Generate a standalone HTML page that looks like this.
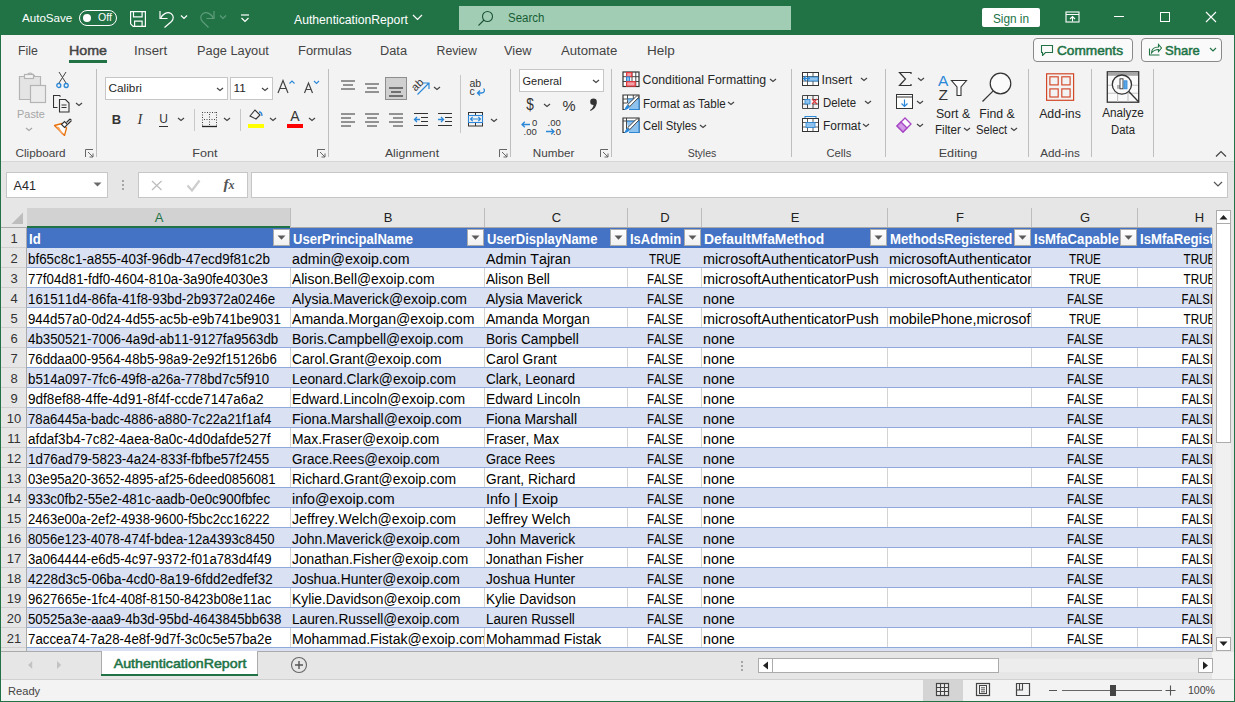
<!DOCTYPE html><html><head><meta charset="utf-8"><style>
html,body{margin:0;padding:0;}
body{width:1235px;height:702px;position:relative;overflow:hidden;background:#F3F3F3;font-family:"Liberation Sans",sans-serif;}
.r{position:absolute;}
.t{position:absolute;white-space:nowrap;}
</style></head><body>
<div class="r" style="left:0px;top:0px;width:1235px;height:35px;background:#217346;"></div>
<div class="t" style="left:22.00px;top:10.98px;font-size:11.6px;line-height:14px;color:#FFFFFF;font-weight:400;">AutoSave</div>
<div class="r" style="left:79px;top:10px;width:36px;height:14px;background:transparent;border:1px solid #fff;border-radius:8px;"></div>
<div class="r" style="left:83px;top:13.5px;width:8px;height:8px;background:#fff;border-radius:50%;"></div>
<div class="t" style="left:98.00px;top:11.36px;font-size:10.5px;line-height:13px;color:#FFFFFF;font-weight:400;">Off</div>
<svg class="r" style="left:129px;top:10px;" width="18" height="18" viewBox="0 0 18 18"><path d="M1.6 1.6h14.8v14.8H4.2L1.6 13.8z" fill="none" stroke="#fff" stroke-width="1.2"/><path d="M4.5 1.6v5.2h8.6V1.6" fill="none" stroke="#fff" stroke-width="1.2"/><path d="M5.6 16.4v-5.2h7.5v5.2" fill="none" stroke="#fff" stroke-width="1.2"/></svg>
<svg class="r" style="left:158px;top:10px;" width="18" height="18" viewBox="0 0 18 18"><path d="M2 1v7.5h7.5" fill="none" stroke="#fff" stroke-width="1.2"/><path d="M2.5 8.5C4.5 3.5 9.5 1.5 13 3.5c3 2 2.8 5.5 0.5 8L6.5 17.5" fill="none" stroke="#fff" stroke-width="1.2"/></svg>
<svg class="r" style="left:180px;top:14px;" width="8" height="6" viewBox="0 0 8 6"><path d="M1 1.5l3 3 3-3" fill="none" stroke="#fff" stroke-width="1.2"/></svg>
<svg class="r" style="left:198px;top:10px;" width="18" height="18" viewBox="0 0 18 18"><path d="M16 1v7.5H8.5" fill="none" stroke="#5E9C7A" stroke-width="1.2"/><path d="M15.5 8.5C13.5 3.5 8.5 1.5 5 3.5c-3 2-2.8 5.5-0.5 8l6 6" fill="none" stroke="#5E9C7A" stroke-width="1.2"/></svg>
<svg class="r" style="left:219px;top:14px;" width="8" height="6" viewBox="0 0 8 6"><path d="M1 1.5l3 3 3-3" fill="none" stroke="#5E9C7A" stroke-width="1.2"/></svg>
<svg class="r" style="left:240px;top:13px;" width="10" height="10" viewBox="0 0 10 10"><path d="M1 2h8" stroke="#fff" stroke-width="1.2"/><path d="M1.5 5l3.5 3.5 3.5-3.5" fill="none" stroke="#fff" stroke-width="1.2"/></svg>
<div class="t" style="left:294.00px;top:12.77px;font-size:12.2px;line-height:15px;color:#FFFFFF;font-weight:400;">AuthenticationReport</div>
<svg class="r" style="left:412px;top:14px;" width="11" height="7" viewBox="0 0 11 7"><path d="M1 1l4.5 4.5 4.5-4.5" fill="none" stroke="#fff" stroke-width="1.2"/></svg>
<div class="r" style="left:459px;top:6px;width:332px;height:24px;background:#A0CDB4;"></div>
<svg class="r" style="left:477px;top:10px;" width="17" height="17" viewBox="0 0 17 17"><circle cx="10.5" cy="6.5" r="5" fill="none" stroke="#1E5236" stroke-width="1.1"/><path d="M7 10l-5.5 5.5" stroke="#1E5236" stroke-width="1.1"/></svg>
<div class="t" style="left:507.80px;top:10.84px;font-size:12px;line-height:15px;color:#185C34;font-weight:400;transform:scaleX(0.955);transform-origin:0 0;">Search</div>
<div class="r" style="left:982px;top:8px;width:58px;height:19px;background:#fff;border-radius:2px;"></div>
<div class="t" style="left:711.00px;width:600px;text-align:center;top:12.24px;font-size:12.3px;line-height:15px;color:#217346;font-weight:400;transform:scaleX(0.96);transform-origin:50% 0;">Sign in</div>
<svg class="r" style="left:1065px;top:11px;" width="15" height="12" viewBox="0 0 15 12"><rect x="1" y="1" width="13" height="10" fill="none" stroke="#fff" stroke-width="1.1"/><path d="M1 3.5h13" stroke="#fff" stroke-width="1"/><path d="M7.5 10.5V5.5M5 8l2.5-2.5L10 8" fill="none" stroke="#fff" stroke-width="1.1"/></svg>
<div class="r" style="left:1114px;top:16px;width:10px;height:1px;background:#fff;"></div>
<div class="r" style="left:1160px;top:12px;width:10px;height:10px;background:transparent;border:1px solid #fff;box-sizing:border-box;"></div>
<svg class="r" style="left:1205px;top:11px;" width="12" height="12" viewBox="0 0 12 12"><path d="M1 1l10 10M11 1L1 11" stroke="#fff" stroke-width="1.1"/></svg>
<div class="r" style="left:0;top:0;width:1px;height:702px;background:#217346;z-index:50"></div>
<div class="r" style="left:1234px;top:0;width:1px;height:702px;background:#217346;z-index:50"></div>
<div class="r" style="left:0;top:701px;width:1235px;height:1px;background:#217346;z-index:50"></div>
<div class="t" style="left:18.00px;top:44.24px;font-size:12.3px;line-height:15px;color:#444444;font-weight:400;">File</div>
<div class="t" style="left:69.00px;top:43.43px;font-size:13.2px;line-height:16px;color:#444444;font-weight:400;transform:scaleX(1.08);transform-origin:0 0;-webkit-text-stroke:0.45px #444;">Home</div>
<div class="t" style="left:134.00px;top:44.24px;font-size:12.3px;line-height:15px;color:#444444;font-weight:400;transform:scaleX(1.08);transform-origin:0 0;">Insert</div>
<div class="t" style="left:197.00px;top:44.24px;font-size:12.3px;line-height:15px;color:#444444;font-weight:400;transform:scaleX(1.04);transform-origin:0 0;">Page Layout</div>
<div class="t" style="left:298.00px;top:44.24px;font-size:12.3px;line-height:15px;color:#444444;font-weight:400;transform:scaleX(1.05);transform-origin:0 0;">Formulas</div>
<div class="t" style="left:380.00px;top:44.24px;font-size:12.3px;line-height:15px;color:#444444;font-weight:400;transform:scaleX(1.04);transform-origin:0 0;">Data</div>
<div class="t" style="left:436.50px;top:44.24px;font-size:12.3px;line-height:15px;color:#444444;font-weight:400;">Review</div>
<div class="t" style="left:504.00px;top:44.24px;font-size:12.3px;line-height:15px;color:#444444;font-weight:400;transform:scaleX(1.04);transform-origin:0 0;">View</div>
<div class="t" style="left:561.00px;top:44.24px;font-size:12.3px;line-height:15px;color:#444444;font-weight:400;transform:scaleX(1.07);transform-origin:0 0;">Automate</div>
<div class="t" style="left:647.00px;top:44.24px;font-size:12.3px;line-height:15px;color:#444444;font-weight:400;transform:scaleX(1.1);transform-origin:0 0;">Help</div>
<div class="r" style="left:69px;top:60px;width:38px;height:3px;background:#217346;"></div>
<div class="r" style="left:1033px;top:38px;width:99px;height:23px;background:#FAFAFA;border:1px solid #8A8A8A;border-radius:4px;box-sizing:border-box;width:100px;height:24px;"></div>
<svg class="r" style="left:1040px;top:44px;" width="14" height="12" viewBox="0 0 14 12"><path d="M1.5 1.5h11v7h-7l-3 3v-3h-1z" fill="none" stroke="#217346" stroke-width="1.1"/></svg>
<div class="t" style="left:1057.00px;top:42.50px;font-size:13px;line-height:16px;color:#217346;font-weight:400;transform:scaleX(1.05);transform-origin:0 0;-webkit-text-stroke:0.5px #217346;">Comments</div>
<div class="r" style="left:1141px;top:38px;width:81px;height:24px;background:#FAFAFA;border:1px solid #8A8A8A;border-radius:4px;box-sizing:border-box;"></div>
<svg class="r" style="left:1148px;top:43px;" width="14" height="13" viewBox="0 0 14 13"><path d="M1.5 5.5v6.5h10" fill="none" stroke="#217346" stroke-width="1.1"/><path d="M3.5 10c0-4 3-6 7-6V1.5l3 3.5-3 3.5V6.5c-3 0-5 1-7 3.5z" fill="none" stroke="#217346" stroke-width="1.1"/></svg>
<div class="t" style="left:1165.00px;top:42.50px;font-size:13px;line-height:16px;color:#217346;font-weight:400;-webkit-text-stroke:0.5px #217346;">Share</div>
<svg class="r" style="left:1209px;top:47px;" width="8" height="6" viewBox="0 0 8 6"><path d="M1 1l3 3 3-3" fill="none" stroke="#217346" stroke-width="1.2"/></svg>
<div class="r" style="left:96px;top:69px;width:1px;height:88px;background:#BEBEBE;"></div>
<div class="r" style="left:328px;top:69px;width:1px;height:88px;background:#BEBEBE;"></div>
<div class="r" style="left:510px;top:69px;width:1px;height:88px;background:#BEBEBE;"></div>
<div class="r" style="left:611px;top:69px;width:1px;height:88px;background:#BEBEBE;"></div>
<div class="r" style="left:791px;top:69px;width:1px;height:88px;background:#BEBEBE;"></div>
<div class="r" style="left:885px;top:69px;width:1px;height:88px;background:#BEBEBE;"></div>
<div class="r" style="left:1028px;top:69px;width:1px;height:88px;background:#BEBEBE;"></div>
<div class="r" style="left:1091px;top:69px;width:1px;height:88px;background:#BEBEBE;"></div>
<div class="r" style="left:1153px;top:69px;width:1px;height:88px;background:#BEBEBE;"></div>
<svg class="r" style="left:18px;top:72px;" width="29" height="32" viewBox="0 0 29 32"><path d="M1.5 4.5h6v-1h2a2.5 2.5 0 0 1 5 0h2v1h6v23h-21z" fill="#E4E4E4" stroke="#B4B4B4" stroke-width="1.2"/><rect x="6.5" y="2.5" width="9" height="4" fill="#F3F3F3" stroke="#B4B4B4" stroke-width="1.2"/><rect x="12.5" y="13.5" width="15" height="17" fill="#EBEBEB" stroke="#B4B4B4" stroke-width="1.2"/></svg>
<div class="t" style="left:-269.50px;width:600px;text-align:center;top:106.45px;font-size:11.7px;line-height:15px;color:#A6A6A6;font-weight:400;transform:scaleX(0.93);transform-origin:50% 0;">Paste</div>
<svg class="r" style="left:25px;top:126.5px;" width="8" height="5" viewBox="0 0 8 5"><path d="M1 1l3.0 2.5 3.0 -2.5" fill="none" stroke="#A6A6A6" stroke-width="1.2"/></svg>
<svg class="r" style="left:56px;top:71px;" width="13" height="18" viewBox="0 0 13 18"><path d="M3 1l7 11M10 1L3 12" stroke="#444" stroke-width="1"/><circle cx="2.8" cy="14.5" r="2" fill="none" stroke="#2B88D8" stroke-width="1.3"/><circle cx="10.2" cy="14.5" r="2" fill="none" stroke="#2B88D8" stroke-width="1.3"/></svg>
<svg class="r" style="left:53px;top:95px;" width="18" height="18" viewBox="0 0 18 18"><path d="M4.5 12.5h-4v-12h6l1 1" fill="none" stroke="#333" stroke-width="1.1"/><path d="M6.5 4.5h6l3.5 3.5v9h-9.5z" fill="none" stroke="#333" stroke-width="1.1"/><path d="M8.5 10h5M8.5 12.5h5" stroke="#333" stroke-width="1"/></svg>
<svg class="r" style="left:75px;top:101.5px;" width="8" height="5" viewBox="0 0 8 5"><path d="M1 1l3.0 2.5 3.0 -2.5" fill="none" stroke="#444" stroke-width="1.2"/></svg>
<svg class="r" style="left:53px;top:117px;" width="19" height="19" viewBox="0 0 19 19"><path d="M1.5 8.5l7.5-2 4.5 4.5-2 7.5z" fill="#fff" stroke="#E8700B" stroke-width="1.3" stroke-linejoin="round"/><path d="M3 9.5l3 0.5 3.5 6.5-0.5 1z" fill="#F7A35C"/><path d="M8.5 7.5l3-3 3 3-3 3z" fill="#fff" stroke="#333" stroke-width="1.1"/><path d="M13.5 5.5l3.5-3.5M15 7l3.5-3.5M17 2l1.5 1.5" stroke="#333" stroke-width="1.1"/></svg>
<div class="t" style="left:15.50px;top:144.95px;font-size:11.7px;line-height:15px;color:#444444;font-weight:400;">Clipboard</div>
<svg class="r" style="left:85px;top:149px;" width="9" height="9" viewBox="0 0 9 9"><path d="M0.5 8V0.5H8" fill="none" stroke="#666" stroke-width="1"/><path d="M3 3l5 5M8 4.5V8H4.5" fill="none" stroke="#666" stroke-width="1"/></svg>
<div class="r" style="left:105px;top:77px;width:123px;height:23px;background:#FFFFFF;border:1px solid #C6C6C6;box-sizing:border-box;"></div>
<div class="t" style="left:108.50px;top:81.41px;font-size:11.8px;line-height:15px;color:#262626;font-weight:400;">Calibri</div>
<svg class="r" style="left:216px;top:86.5px;" width="8" height="5" viewBox="0 0 8 5"><path d="M1 1l3.0 2.5 3.0 -2.5" fill="none" stroke="#444" stroke-width="1.2"/></svg>
<div class="r" style="left:230px;top:77px;width:43px;height:23px;background:#FFFFFF;border:1px solid #C6C6C6;box-sizing:border-box;"></div>
<div class="t" style="left:233.50px;top:81.41px;font-size:11.8px;line-height:15px;color:#262626;font-weight:400;">11</div>
<svg class="r" style="left:261px;top:86.5px;" width="8" height="5" viewBox="0 0 8 5"><path d="M1 1l3.0 2.5 3.0 -2.5" fill="none" stroke="#444" stroke-width="1.2"/></svg>
<svg class="r" style="left:277px;top:79px;" width="19" height="16" viewBox="0 0 19 16"><path d="M1 14L6 1.5 11 14M3 9.5h6" fill="none" stroke="#444" stroke-width="1.2"/><path d="M12.5 4.5l2.5-2.5 2.5 2.5" fill="none" stroke="#2B88D8" stroke-width="1.1"/></svg>
<svg class="r" style="left:303px;top:79px;" width="17" height="16" viewBox="0 0 17 16"><path d="M1.5 14L5.5 4 9.5 14M3 10.5h5" fill="none" stroke="#444" stroke-width="1.2"/><path d="M11 2l2.5 2.5L16 2" fill="none" stroke="#2B88D8" stroke-width="1.1"/></svg>
<div class="t" style="left:-183.50px;width:600px;text-align:center;top:112.00px;font-size:13px;line-height:16px;color:#333;font-weight:700;">B</div>
<div class="t" style="left:-160.00px;width:600px;text-align:center;top:110.48px;font-size:14.5px;line-height:18px;color:#333;font-weight:400;font-style:italic;font-family:&quot;Liberation Serif&quot;,serif;">I</div>
<div class="t" style="left:-136.50px;width:600px;text-align:center;top:111.84px;font-size:12px;line-height:15px;color:#333;font-weight:400;">U</div>
<div class="r" style="left:159px;top:126px;width:9px;height:1px;background:#333;"></div>
<svg class="r" style="left:177px;top:116.5px;" width="8" height="5" viewBox="0 0 8 5"><path d="M1 1l3.0 2.5 3.0 -2.5" fill="none" stroke="#444" stroke-width="1.2"/></svg>
<div class="r" style="left:194px;top:109px;width:1px;height:22px;background:#C8C8C8;"></div>
<svg class="r" style="left:201px;top:111px;" width="17" height="17" viewBox="0 0 17 17"><path d="M1 1.5h15M1.5 1v14M15.5 1v14M8.5 3v11M3 8.5h11" fill="none" stroke="#444" stroke-width="1" stroke-dasharray="1 1.5"/><path d="M1 15.5h15" stroke="#222" stroke-width="1.3"/></svg>
<svg class="r" style="left:223px;top:116.5px;" width="8" height="5" viewBox="0 0 8 5"><path d="M1 1l3.0 2.5 3.0 -2.5" fill="none" stroke="#444" stroke-width="1.2"/></svg>
<div class="r" style="left:240px;top:109px;width:1px;height:22px;background:#C8C8C8;"></div>
<svg class="r" style="left:247px;top:108px;" width="18" height="14" viewBox="0 0 18 14"><path d="M3 8l5-6 5 5-4 4z" fill="none" stroke="#333" stroke-width="1.1"/><path d="M12 4c2 0 3 2 3 4" fill="none" stroke="#2B88D8" stroke-width="1.3"/></svg>
<div class="r" style="left:248px;top:124px;width:16px;height:4px;background:#FFFF00;"></div>
<svg class="r" style="left:269px;top:116.5px;" width="8" height="5" viewBox="0 0 8 5"><path d="M1 1l3.0 2.5 3.0 -2.5" fill="none" stroke="#444" stroke-width="1.2"/></svg>
<div class="t" style="left:-5.00px;width:600px;text-align:center;top:107.15px;font-size:14px;line-height:18px;color:#333;font-weight:400;">A</div>
<div class="r" style="left:287px;top:124px;width:16px;height:4px;background:#FF0000;"></div>
<svg class="r" style="left:308px;top:116.5px;" width="8" height="5" viewBox="0 0 8 5"><path d="M1 1l3.0 2.5 3.0 -2.5" fill="none" stroke="#444" stroke-width="1.2"/></svg>
<div class="t" style="left:-95.00px;width:600px;text-align:center;top:144.95px;font-size:11.7px;line-height:15px;color:#444444;font-weight:400;transform:scaleX(1.08);transform-origin:50% 0;">Font</div>
<svg class="r" style="left:317px;top:149px;" width="9" height="9" viewBox="0 0 9 9"><path d="M0.5 8V0.5H8" fill="none" stroke="#666" stroke-width="1"/><path d="M3 3l5 5M8 4.5V8H4.5" fill="none" stroke="#666" stroke-width="1"/></svg>
<svg class="r" style="left:340px;top:79.5px;" width="16" height="16" viewBox="0 0 16 16"><path d="M1 1.0h14" stroke="#333" stroke-width="1"/><path d="M3 5.0h10" stroke="#333" stroke-width="1"/><path d="M1 9.0h14" stroke="#333" stroke-width="1"/></svg>
<svg class="r" style="left:364px;top:82.5px;" width="16" height="16" viewBox="0 0 16 16"><path d="M1 1.0h14" stroke="#333" stroke-width="1"/><path d="M3 5.0h10" stroke="#333" stroke-width="1"/><path d="M1 9.0h14" stroke="#333" stroke-width="1"/></svg>
<div class="r" style="left:385px;top:77px;width:22px;height:23px;background:#D0D0D0;border:1px solid #8E8E8E;box-sizing:border-box;"></div>
<svg class="r" style="left:388px;top:86.5px;" width="16" height="16" viewBox="0 0 16 16"><path d="M1 1.0h14" stroke="#111" stroke-width="1"/><path d="M3 5.0h10" stroke="#111" stroke-width="1"/><path d="M1 9.0h14" stroke="#111" stroke-width="1"/></svg>
<svg class="r" style="left:411px;top:77px;" width="21" height="19" viewBox="0 0 21 19"><text x="1" y="12" font-size="11" font-family="Liberation Sans" fill="#333" transform="rotate(-45 6 9)">ab</text><path d="M6.5 17.5l11-11M12 6h6v6" fill="none" stroke="#2B88D8" stroke-width="1.2"/></svg>
<svg class="r" style="left:432.5px;top:86.0px;" width="8" height="5" viewBox="0 0 8 5"><path d="M1 1l3.0 2.5 3.0 -2.5" fill="none" stroke="#444" stroke-width="1.2"/></svg>
<div class="r" style="left:460px;top:75px;width:1px;height:58px;background:#C8C8C8;"></div>
<svg class="r" style="left:469px;top:78px;" width="18" height="19" viewBox="0 0 18 19"><text x="0.5" y="9" font-size="10.5" font-family="Liberation Sans" fill="#333">ab</text><text x="0.5" y="17" font-size="10.5" font-family="Liberation Sans" fill="#333">c</text><path d="M14.5 10.5c1.5 1 1.5 4.5-2 4.5h-4M11 12.5l-2.5 2.5 2.5 2.5" fill="none" stroke="#2B88D8" stroke-width="1.3"/></svg>
<svg class="r" style="left:340px;top:113px;" width="16" height="16" viewBox="0 0 16 16"><path d="M1 1.0h14" stroke="#333" stroke-width="1"/><path d="M1 5.0h10" stroke="#333" stroke-width="1"/><path d="M1 9.0h14" stroke="#333" stroke-width="1"/><path d="M1 13.0h10" stroke="#333" stroke-width="1"/></svg>
<svg class="r" style="left:364px;top:113px;" width="16" height="16" viewBox="0 0 16 16"><path d="M1 1.0h14" stroke="#333" stroke-width="1"/><path d="M3 5.0h10" stroke="#333" stroke-width="1"/><path d="M1 9.0h14" stroke="#333" stroke-width="1"/><path d="M3 13.0h10" stroke="#333" stroke-width="1"/></svg>
<svg class="r" style="left:388px;top:113px;" width="16" height="16" viewBox="0 0 16 16"><path d="M1 1.0h14" stroke="#333" stroke-width="1"/><path d="M5 5.0h10" stroke="#333" stroke-width="1"/><path d="M1 9.0h14" stroke="#333" stroke-width="1"/><path d="M5 13.0h10" stroke="#333" stroke-width="1"/></svg>
<svg class="r" style="left:413px;top:112px;" width="16" height="16" viewBox="0 0 16 16"><path d="M1 1.5h14M8 5.5h7M8 9.5h7M1 13.5h14" stroke="#333" stroke-width="1"/><path d="M7 7.5H1.5M4 5l-2.5 2.5 2.5 2.5" fill="none" stroke="#2B88D8" stroke-width="1.3"/></svg>
<svg class="r" style="left:437px;top:112px;" width="16" height="16" viewBox="0 0 16 16"><path d="M1 1.5h14M8 5.5h7M8 9.5h7M1 13.5h14" stroke="#333" stroke-width="1"/><path d="M1 7.5h5.5M4 5l2.5 2.5L4 10" fill="none" stroke="#2B88D8" stroke-width="1.3"/></svg>
<svg class="r" style="left:467px;top:111px;" width="18" height="17" viewBox="0 0 18 17"><rect x="1.5" y="1.5" width="14" height="13.5" fill="none" stroke="#333" stroke-width="1"/><path d="M8.5 1.5v3M8.5 11.5v3.5" stroke="#333" stroke-width="1"/><rect x="1.5" y="4.5" width="14" height="7" fill="#F3F3F3" stroke="#2B88D8" stroke-width="1.1"/><path d="M3.5 8h10M5.7 5.8L3.5 8l2.2 2.2M11.3 5.8L13.5 8l-2.2 2.2" fill="none" stroke="#2B88D8" stroke-width="1.2"/></svg>
<svg class="r" style="left:490px;top:118.0px;" width="8" height="5" viewBox="0 0 8 5"><path d="M1 1l3.0 2.5 3.0 -2.5" fill="none" stroke="#444" stroke-width="1.2"/></svg>
<div class="t" style="left:111.50px;width:600px;text-align:center;top:144.95px;font-size:11.7px;line-height:15px;color:#444444;font-weight:400;transform:scaleX(1.04);transform-origin:50% 0;">Alignment</div>
<svg class="r" style="left:499px;top:149px;" width="9" height="9" viewBox="0 0 9 9"><path d="M0.5 8V0.5H8" fill="none" stroke="#666" stroke-width="1"/><path d="M3 3l5 5M8 4.5V8H4.5" fill="none" stroke="#666" stroke-width="1"/></svg>
<div class="r" style="left:519px;top:69px;width:85px;height:23px;background:#FFFFFF;border:1px solid #C6C6C6;box-sizing:border-box;"></div>
<div class="t" style="left:522.50px;top:73.69px;font-size:11px;line-height:14px;color:#262626;font-weight:400;">General</div>
<svg class="r" style="left:592px;top:78.5px;" width="8" height="5" viewBox="0 0 8 5"><path d="M1 1l3.0 2.5 3.0 -2.5" fill="none" stroke="#444" stroke-width="1.2"/></svg>
<div class="t" style="left:229.50px;width:600px;text-align:center;top:94.96px;font-size:16px;line-height:20px;color:#333;font-weight:400;transform:scaleX(0.85);transform-origin:50% 0;">$</div>
<svg class="r" style="left:543px;top:102.5px;" width="8" height="5" viewBox="0 0 8 5"><path d="M1 1l3.0 2.5 3.0 -2.5" fill="none" stroke="#444" stroke-width="1.2"/></svg>
<div class="t" style="left:269.00px;width:600px;text-align:center;top:95.63px;font-size:15.5px;line-height:19px;color:#333;font-weight:400;transform:scaleX(0.95);transform-origin:50% 0;">%</div>
<svg class="r" style="left:588px;top:97px;" width="10" height="15" viewBox="0 0 10 15"><circle cx="5.5" cy="4.8" r="3.3" fill="#333"/><path d="M8.6 5.5c0 4-2.5 7-6 8.5l-0.6-1c2.3-1.3 3.6-3.3 3.6-5.5z" fill="#333"/></svg>
<svg class="r" style="left:520px;top:116px;" width="20" height="21" viewBox="0 0 20 21"><path d="M10 8.5H2M4.8 5.7L2 8.5l2.8 2.8" fill="none" stroke="#2B88D8" stroke-width="1.3"/><text x="12" y="9.5" font-size="9.5" font-family="Liberation Sans" fill="#333">0</text><text x="3.5" y="19" font-size="9.5" font-family="Liberation Sans" fill="#333">.00</text></svg>
<svg class="r" style="left:544px;top:116px;" width="20" height="21" viewBox="0 0 20 21"><text x="3.5" y="9.5" font-size="9.5" font-family="Liberation Sans" fill="#333">.00</text><path d="M2 15.5h8M7.2 12.7l2.8 2.8-2.8 2.8" fill="none" stroke="#2B88D8" stroke-width="1.3"/><text x="9" y="19" font-size="9.5" font-family="Liberation Sans" fill="#333">.0</text></svg>
<div class="t" style="left:253.50px;width:600px;text-align:center;top:144.95px;font-size:11.7px;line-height:15px;color:#444444;font-weight:400;">Number</div>
<svg class="r" style="left:600px;top:149px;" width="9" height="9" viewBox="0 0 9 9"><path d="M0.5 8V0.5H8" fill="none" stroke="#666" stroke-width="1"/><path d="M3 3l5 5M8 4.5V8H4.5" fill="none" stroke="#666" stroke-width="1"/></svg>
<svg class="r" style="left:622px;top:71px;" width="18" height="17" viewBox="0 0 18 17"><rect x="1" y="1" width="16" height="14.5" fill="#fff" stroke="#333" stroke-width="1.2"/><path d="M1 5.7h16M1 10.5h16M4.5 1v14.5M10 1v14.5M13.8 1v14.5" stroke="#333" stroke-width="0.9"/><rect x="4.6" y="1.6" width="5.2" height="3.9" fill="#F4A0A8" stroke="#E03A3E" stroke-width="1.2"/><rect x="4.6" y="5.9" width="3" height="4.4" fill="#8FC3EE" stroke="#2B88D8" stroke-width="1"/><rect x="4.6" y="10.7" width="8.6" height="4.4" fill="#F4A0A8" stroke="#E03A3E" stroke-width="1.2"/></svg>
<div class="t" style="left:642.50px;top:73.24px;font-size:12.3px;line-height:15px;color:#262626;font-weight:400;">Conditional Formatting</div>
<svg class="r" style="left:769px;top:77.5px;" width="8" height="5" viewBox="0 0 8 5"><path d="M1 1l3.0 2.5 3.0 -2.5" fill="none" stroke="#444" stroke-width="1.2"/></svg>
<svg class="r" style="left:622px;top:94px;" width="18" height="17" viewBox="0 0 18 17"><path d="M3 15.5H1V1h16v14.5h-3" fill="#fff" stroke="#333" stroke-width="1.2"/><path d="M1 5h16M1 9h4.5M5.5 1v8M11.3 1v4" stroke="#333" stroke-width="0.9"/><path d="M5.5 5h11.5v10.5H7" fill="#8FC3EE" stroke="#2B88D8" stroke-width="1.1"/><path d="M16.8 3.2l-9 9.3-2-2 9.3-9z" fill="#fff" stroke="#333" stroke-width="0.9"/><path d="M7.5 12.8c-0.5 2-2.5 3.2-5.5 3.2 0.8-0.8 1.2-2.8 3.3-5.2z" fill="#2B88D8"/></svg>
<div class="t" style="left:642.50px;top:96.74px;font-size:12.3px;line-height:15px;color:#262626;font-weight:400;transform:scaleX(0.94);transform-origin:0 0;">Format as Table</div>
<svg class="r" style="left:727px;top:101.0px;" width="8" height="5" viewBox="0 0 8 5"><path d="M1 1l3.0 2.5 3.0 -2.5" fill="none" stroke="#444" stroke-width="1.2"/></svg>
<svg class="r" style="left:622px;top:117px;" width="18" height="17" viewBox="0 0 18 17"><path d="M3 15.5H1V1h16v14.5h-3" fill="#fff" stroke="#333" stroke-width="1.2"/><path d="M1 4h16M4.5 1v11" stroke="#333" stroke-width="0.9"/><path d="M4.8 4.2h12.2v11.3H7" fill="#8FC3EE" stroke="#2B88D8" stroke-width="1.1"/><path d="M16.8 3.2l-9 9.3-2-2 9.3-9z" fill="#fff" stroke="#333" stroke-width="0.9"/><path d="M7.5 12.8c-0.5 2-2.5 3.2-5.5 3.2 0.8-0.8 1.2-2.8 3.3-5.2z" fill="#2B88D8"/></svg>
<div class="t" style="left:642.50px;top:119.24px;font-size:12.3px;line-height:15px;color:#262626;font-weight:400;transform:scaleX(0.925);transform-origin:0 0;">Cell Styles</div>
<svg class="r" style="left:699px;top:123.5px;" width="8" height="5" viewBox="0 0 8 5"><path d="M1 1l3.0 2.5 3.0 -2.5" fill="none" stroke="#444" stroke-width="1.2"/></svg>
<div class="t" style="left:401.50px;width:600px;text-align:center;top:144.95px;font-size:11.7px;line-height:15px;color:#444444;font-weight:400;transform:scaleX(0.9);transform-origin:50% 0;">Styles</div>
<svg class="r" style="left:802px;top:72px;" width="18" height="17" viewBox="0 0 18 17"><rect x="0.5" y="0.5" width="16" height="13" fill="#fff" stroke="#333"/><path d="M0.5 4.5h16M0.5 9h16M5.5 0.5v13M11 0.5v13" stroke="#333" stroke-width="0.8"/><rect x="6" y="5" width="10" height="4" fill="#8FC3EE" stroke="#2B88D8" stroke-width="0.8"/><path d="M8 6.5H1.5M4 4l-2.5 2.5L4 9" fill="none" stroke="#2B88D8" stroke-width="1.3"/></svg>
<div class="t" style="left:821.50px;top:73.24px;font-size:12.3px;line-height:15px;color:#262626;font-weight:400;">Insert</div>
<svg class="r" style="left:860px;top:76.5px;" width="8" height="5" viewBox="0 0 8 5"><path d="M1 1l3.0 2.5 3.0 -2.5" fill="none" stroke="#444" stroke-width="1.2"/></svg>
<svg class="r" style="left:802px;top:95px;" width="18" height="17" viewBox="0 0 18 17"><path d="M0.5 0.5h16M0.5 13.5h16M0.5 4.5h5M11 4.5h5.5M0.5 9h5M11 9h5.5M0.5 0.5v13M16.5 0.5v13M5.5 0.5v4M5.5 9v4.5M11 0.5v4M11 9v4.5" fill="none" stroke="#333" stroke-width="0.9"/><rect x="3" y="4.5" width="5" height="4.5" fill="#8FC3EE" stroke="#2B88D8" stroke-width="0.8"/><path d="M10 4l5 5M15 4l-5 5" stroke="#E03A3E" stroke-width="1.1"/></svg>
<div class="t" style="left:822.50px;top:96.24px;font-size:12.3px;line-height:15px;color:#262626;font-weight:400;transform:scaleX(0.93);transform-origin:0 0;">Delete</div>
<svg class="r" style="left:864px;top:99.5px;" width="8" height="5" viewBox="0 0 8 5"><path d="M1 1l3.0 2.5 3.0 -2.5" fill="none" stroke="#444" stroke-width="1.2"/></svg>
<svg class="r" style="left:802px;top:116px;" width="18" height="17" viewBox="0 0 18 17"><rect x="0.5" y="2.5" width="16" height="13" fill="#fff" stroke="#333"/><path d="M0.5 6.5h16M0.5 11h16M5.5 2.5v13M11 2.5v13" stroke="#333" stroke-width="0.8"/><rect x="4" y="6.5" width="9" height="5" fill="#8FC3EE" stroke="#2B88D8" stroke-width="0.8"/><path d="M3 0.5h11M3 0v2M14 0v2" stroke="#2B88D8" stroke-width="1"/></svg>
<div class="t" style="left:822.50px;top:119.24px;font-size:12.3px;line-height:15px;color:#262626;font-weight:400;transform:scaleX(0.97);transform-origin:0 0;">Format</div>
<svg class="r" style="left:862px;top:122.5px;" width="8" height="5" viewBox="0 0 8 5"><path d="M1 1l3.0 2.5 3.0 -2.5" fill="none" stroke="#444" stroke-width="1.2"/></svg>
<div class="t" style="left:539.00px;width:600px;text-align:center;top:144.95px;font-size:11.7px;line-height:15px;color:#444444;font-weight:400;transform:scaleX(0.96);transform-origin:50% 0;">Cells</div>
<svg class="r" style="left:898px;top:71px;" width="15" height="16" viewBox="0 0 15 16"><path d="M13 3V1.5H1.5l6 6.5-6 6.5H13V13" fill="none" stroke="#333" stroke-width="1.2"/></svg>
<svg class="r" style="left:917px;top:76.5px;" width="8" height="5" viewBox="0 0 8 5"><path d="M1 1l3.0 2.5 3.0 -2.5" fill="none" stroke="#444" stroke-width="1.2"/></svg>
<svg class="r" style="left:896px;top:94px;" width="18" height="16" viewBox="0 0 18 16"><rect x="0.5" y="0.5" width="16" height="14" fill="#fff" stroke="#333"/><path d="M0.5 3h16" stroke="#333"/><path d="M8.5 5.5v7M5.5 9.5l3 3 3-3" fill="none" stroke="#2B88D8" stroke-width="1.2"/></svg>
<svg class="r" style="left:916px;top:99.5px;" width="8" height="5" viewBox="0 0 8 5"><path d="M1 1l3.0 2.5 3.0 -2.5" fill="none" stroke="#444" stroke-width="1.2"/></svg>
<svg class="r" style="left:896px;top:116px;" width="18" height="18" viewBox="0 0 18 18"><path d="M1 10l8-8 6 6-8 8z" fill="#fff" stroke="#A646C4" stroke-width="1.3"/><path d="M1 10l4-4 6 6-4 4z" fill="#D39BE5" stroke="#A646C4" stroke-width="1.3"/></svg>
<svg class="r" style="left:916px;top:122.5px;" width="8" height="5" viewBox="0 0 8 5"><path d="M1 1l3.0 2.5 3.0 -2.5" fill="none" stroke="#444" stroke-width="1.2"/></svg>
<svg class="r" style="left:936px;top:72px;" width="34" height="29" viewBox="0 0 34 29"><text x="2" y="13.5" font-size="15.5" font-family="Liberation Sans" fill="#2B88D8">A</text><text x="2.5" y="28" font-size="15.5" font-family="Liberation Sans" fill="#333">Z</text><path d="M15.5 8.5h15l-5.5 6.5v8.5h-4v-8.5z" fill="#fff" stroke="#333" stroke-width="1.1"/></svg>
<div class="t" style="left:653.00px;width:600px;text-align:center;top:106.74px;font-size:12.3px;line-height:15px;color:#262626;font-weight:400;">Sort &amp;</div>
<div class="t" style="left:934.50px;top:123.24px;font-size:12.3px;line-height:15px;color:#262626;font-weight:400;transform:scaleX(0.947);transform-origin:0 0;">Filter</div>
<svg class="r" style="left:963px;top:127.0px;" width="8" height="5" viewBox="0 0 8 5"><path d="M1 1l3.0 2.5 3.0 -2.5" fill="none" stroke="#444" stroke-width="1.2"/></svg>
<svg class="r" style="left:980px;top:71px;" width="34" height="32" viewBox="0 0 34 32"><circle cx="20.5" cy="12.5" r="10.3" fill="#FAFAFA" stroke="#333" stroke-width="1.2"/><path d="M13.2 19.8L2.5 30.5" stroke="#333" stroke-width="1.2"/></svg>
<div class="t" style="left:697.00px;width:600px;text-align:center;top:106.74px;font-size:12.3px;line-height:15px;color:#262626;font-weight:400;">Find &amp;</div>
<div class="t" style="left:976.00px;top:123.24px;font-size:12.3px;line-height:15px;color:#262626;font-weight:400;transform:scaleX(0.913);transform-origin:0 0;">Select</div>
<svg class="r" style="left:1010px;top:127.0px;" width="8" height="5" viewBox="0 0 8 5"><path d="M1 1l3.0 2.5 3.0 -2.5" fill="none" stroke="#444" stroke-width="1.2"/></svg>
<div class="t" style="left:657.50px;width:600px;text-align:center;top:144.95px;font-size:11.7px;line-height:15px;color:#444444;font-weight:400;transform:scaleX(1.08);transform-origin:50% 0;">Editing</div>
<svg class="r" style="left:1045px;top:72px;" width="30" height="30" viewBox="0 0 30 30"><rect x="1.6" y="1.8" width="27" height="26.5" fill="none" stroke="#D24726" stroke-width="1.2"/><rect x="4.9" y="4.8" width="8.3" height="8.1" fill="none" stroke="#D24726" stroke-width="1.15"/><rect x="16.8" y="4.8" width="8.3" height="8.1" fill="none" stroke="#D24726" stroke-width="1.15"/><rect x="4.9" y="16.9" width="8.3" height="8.1" fill="none" stroke="#D24726" stroke-width="1.15"/><rect x="16.8" y="16.9" width="8.3" height="8.1" fill="none" stroke="#D24726" stroke-width="1.15"/></svg>
<div class="t" style="left:760.00px;width:600px;text-align:center;top:106.74px;font-size:12.3px;line-height:15px;color:#262626;font-weight:400;">Add-ins</div>
<div class="t" style="left:760.00px;width:600px;text-align:center;top:144.95px;font-size:11.7px;line-height:15px;color:#444444;font-weight:400;">Add-ins</div>
<svg class="r" style="left:1106px;top:70px;" width="34" height="34" viewBox="0 0 34 34"><rect x="1.3" y="1.8" width="31.4" height="30.4" fill="#FAFAFA" stroke="#333" stroke-width="1.3"/><rect x="2" y="2.5" width="30" height="3.3" fill="#A6A6A6"/><path d="M2 15.3h30M2 23.3h30M11.6 5.8v26M22 5.8v26" stroke="#C4C4C4" stroke-width="1.1"/><circle cx="15.9" cy="14.6" r="9.6" fill="#FAFAFA" stroke="#333" stroke-width="1.3"/><rect x="11" y="15" width="3" height="3.8" fill="#B4B4B4"/><rect x="14" y="8.8" width="3" height="10" fill="#fff" stroke="#333" stroke-width="0.9"/><rect x="18" y="10.8" width="3" height="8" fill="#5EA8E8" stroke="#2B88D8" stroke-width="0.8"/><path d="M22.8 21.5l10 10.5" stroke="#333" stroke-width="1.3"/></svg>
<div class="t" style="left:823.00px;width:600px;text-align:center;top:105.74px;font-size:12.3px;line-height:15px;color:#262626;font-weight:400;transform:scaleX(0.95);transform-origin:50% 0;">Analyze</div>
<div class="t" style="left:823.00px;width:600px;text-align:center;top:123.24px;font-size:12.3px;line-height:15px;color:#262626;font-weight:400;transform:scaleX(0.92);transform-origin:50% 0;">Data</div>
<svg class="r" style="left:1215px;top:150px;" width="12" height="8" viewBox="0 0 12 8"><path d="M1 6.5l5-5 5 5" fill="none" stroke="#444" stroke-width="1.2"/></svg>
<div class="r" style="left:1px;top:161px;width:1233px;height:1px;background:#D6D6D6;"></div>
<div class="r" style="left:1px;top:162px;width:1233px;height:46px;background:#E6E6E6;"></div>
<div class="r" style="left:6px;top:172px;width:102px;height:26px;background:#FFFFFF;border:1px solid #C6C6C6;box-sizing:border-box;"></div>
<div class="t" style="left:13.50px;top:177.63px;font-size:12.6px;line-height:16px;color:#262626;font-weight:400;">A41</div>
<svg class="r" style="left:93px;top:182px;" width="9" height="5" viewBox="0 0 9 5"><path d="M0.5 0.5h8L4.5 4.5z" fill="#6A6A6A"/></svg>
<div class="r" style="left:122px;top:180px;width:2px;height:2px;background:#A6A6A6;"></div>
<div class="r" style="left:122px;top:184px;width:2px;height:2px;background:#A6A6A6;"></div>
<div class="r" style="left:122px;top:188px;width:2px;height:2px;background:#A6A6A6;"></div>
<div class="r" style="left:138px;top:172px;width:110px;height:26px;background:#FFFFFF;border:1px solid #C6C6C6;box-sizing:border-box;"></div>
<svg class="r" style="left:151px;top:180px;" width="12" height="11" viewBox="0 0 12 11"><path d="M1 1l9.5 9M10.5 1L1 10" stroke="#BDBDBD" stroke-width="1.3"/></svg>
<svg class="r" style="left:186px;top:179px;" width="15" height="13" viewBox="0 0 15 13"><path d="M1.5 6.5l4.5 5 7.5-10" fill="none" stroke="#CDCDCD" stroke-width="2.2"/></svg>
<div class="t" style="left:-71.00px;width:600px;text-align:center;top:173.63px;font-size:15.5px;line-height:19px;color:#555;font-weight:400;font-family:&quot;Liberation Serif&quot;,serif;font-weight:700;"><i>f</i><i style="font-size:12px">x</i></div>
<div class="r" style="left:251px;top:172px;width:977px;height:26px;background:#FFFFFF;border:1px solid #C6C6C6;box-sizing:border-box;"></div>
<svg class="r" style="left:1213px;top:181px;" width="10" height="7" viewBox="0 0 10 7"><path d="M1 1l4 4 4-4" fill="none" stroke="#555" stroke-width="1.2"/></svg>
<div class="r" style="left:1px;top:208px;width:1233px;height:20px;background:#E6E6E6;"></div>
<div class="r" style="left:1px;top:208px;width:26px;height:20px;background:#E6E6E6;"></div>
<svg class="r" style="left:11px;top:212px;" width="13" height="13" viewBox="0 0 13 13"><path d="M12 0.5V12H0.5z" fill="#BDBDBD"/></svg>
<div class="r" style="left:1212px;top:208px;width:22px;height:444px;background:#E6E6E6;"></div>
<div class="r" style="left:27px;top:208px;width:264px;height:20px;background:#D2D2D2;"></div>
<div class="r" style="left:27px;top:226px;width:264px;height:2px;background:#217346;"></div>
<div class="t" style="left:-141.00px;width:600px;text-align:center;top:210.00px;font-size:13px;line-height:16px;color:#217346;font-weight:400;">A</div>
<div class="r" style="left:290px;top:208px;width:1px;height:20px;background:#BDBDBD;"></div>
<div class="t" style="left:88.00px;width:600px;text-align:center;top:210.00px;font-size:13px;line-height:16px;color:#222222;font-weight:400;">B</div>
<div class="r" style="left:484px;top:208px;width:1px;height:20px;background:#BDBDBD;"></div>
<div class="t" style="left:256.50px;width:600px;text-align:center;top:210.00px;font-size:13px;line-height:16px;color:#222222;font-weight:400;">C</div>
<div class="r" style="left:627px;top:208px;width:1px;height:20px;background:#BDBDBD;"></div>
<div class="t" style="left:365.00px;width:600px;text-align:center;top:210.00px;font-size:13px;line-height:16px;color:#222222;font-weight:400;">D</div>
<div class="r" style="left:701px;top:208px;width:1px;height:20px;background:#BDBDBD;"></div>
<div class="t" style="left:495.00px;width:600px;text-align:center;top:210.00px;font-size:13px;line-height:16px;color:#222222;font-weight:400;">E</div>
<div class="r" style="left:887px;top:208px;width:1px;height:20px;background:#BDBDBD;"></div>
<div class="t" style="left:660.00px;width:600px;text-align:center;top:210.00px;font-size:13px;line-height:16px;color:#222222;font-weight:400;">F</div>
<div class="r" style="left:1031px;top:208px;width:1px;height:20px;background:#BDBDBD;"></div>
<div class="t" style="left:785.00px;width:600px;text-align:center;top:210.00px;font-size:13px;line-height:16px;color:#222222;font-weight:400;">G</div>
<div class="r" style="left:1137px;top:208px;width:1px;height:20px;background:#BDBDBD;"></div>
<div class="t" style="left:899.50px;width:600px;text-align:center;top:210.00px;font-size:13px;line-height:16px;color:#222222;font-weight:400;">H</div>
<div class="r" style="left:291px;top:227px;width:921px;height:1px;background:#ABABAB;"></div>
<div class="r" style="left:1px;top:227px;width:26px;height:1px;background:#ABABAB;"></div>
<div class="r" style="left:1px;top:228px;width:1211px;height:424px;overflow:hidden;">
<div class="r" style="left:0px;top:0px;width:26px;height:20px;background:#E6E6E6;"></div>
<div class="r" style="left:0px;top:19px;width:26px;height:1px;background:#D0D0D0;"></div>
<div class="t" style="left:-287.00px;width:600px;text-align:center;top:0.50px;font-size:13px;line-height:20px;color:#333333;font-weight:400;">1</div>
<div class="r" style="left:0px;top:20px;width:26px;height:20px;background:#E6E6E6;"></div>
<div class="r" style="left:0px;top:39px;width:26px;height:1px;background:#D0D0D0;"></div>
<div class="t" style="left:-287.00px;width:600px;text-align:center;top:20.50px;font-size:13px;line-height:20px;color:#333333;font-weight:400;">2</div>
<div class="r" style="left:0px;top:40px;width:26px;height:20px;background:#E6E6E6;"></div>
<div class="r" style="left:0px;top:59px;width:26px;height:1px;background:#D0D0D0;"></div>
<div class="t" style="left:-287.00px;width:600px;text-align:center;top:40.50px;font-size:13px;line-height:20px;color:#333333;font-weight:400;">3</div>
<div class="r" style="left:0px;top:60px;width:26px;height:20px;background:#E6E6E6;"></div>
<div class="r" style="left:0px;top:79px;width:26px;height:1px;background:#D0D0D0;"></div>
<div class="t" style="left:-287.00px;width:600px;text-align:center;top:60.50px;font-size:13px;line-height:20px;color:#333333;font-weight:400;">4</div>
<div class="r" style="left:0px;top:80px;width:26px;height:20px;background:#E6E6E6;"></div>
<div class="r" style="left:0px;top:99px;width:26px;height:1px;background:#D0D0D0;"></div>
<div class="t" style="left:-287.00px;width:600px;text-align:center;top:80.50px;font-size:13px;line-height:20px;color:#333333;font-weight:400;">5</div>
<div class="r" style="left:0px;top:100px;width:26px;height:20px;background:#E6E6E6;"></div>
<div class="r" style="left:0px;top:119px;width:26px;height:1px;background:#D0D0D0;"></div>
<div class="t" style="left:-287.00px;width:600px;text-align:center;top:100.50px;font-size:13px;line-height:20px;color:#333333;font-weight:400;">6</div>
<div class="r" style="left:0px;top:120px;width:26px;height:20px;background:#E6E6E6;"></div>
<div class="r" style="left:0px;top:139px;width:26px;height:1px;background:#D0D0D0;"></div>
<div class="t" style="left:-287.00px;width:600px;text-align:center;top:120.50px;font-size:13px;line-height:20px;color:#333333;font-weight:400;">7</div>
<div class="r" style="left:0px;top:140px;width:26px;height:20px;background:#E6E6E6;"></div>
<div class="r" style="left:0px;top:159px;width:26px;height:1px;background:#D0D0D0;"></div>
<div class="t" style="left:-287.00px;width:600px;text-align:center;top:140.50px;font-size:13px;line-height:20px;color:#333333;font-weight:400;">8</div>
<div class="r" style="left:0px;top:160px;width:26px;height:20px;background:#E6E6E6;"></div>
<div class="r" style="left:0px;top:179px;width:26px;height:1px;background:#D0D0D0;"></div>
<div class="t" style="left:-287.00px;width:600px;text-align:center;top:160.50px;font-size:13px;line-height:20px;color:#333333;font-weight:400;">9</div>
<div class="r" style="left:0px;top:180px;width:26px;height:20px;background:#E6E6E6;"></div>
<div class="r" style="left:0px;top:199px;width:26px;height:1px;background:#D0D0D0;"></div>
<div class="t" style="left:-287.00px;width:600px;text-align:center;top:180.50px;font-size:13px;line-height:20px;color:#333333;font-weight:400;">10</div>
<div class="r" style="left:0px;top:200px;width:26px;height:20px;background:#E6E6E6;"></div>
<div class="r" style="left:0px;top:219px;width:26px;height:1px;background:#D0D0D0;"></div>
<div class="t" style="left:-287.00px;width:600px;text-align:center;top:200.50px;font-size:13px;line-height:20px;color:#333333;font-weight:400;">11</div>
<div class="r" style="left:0px;top:220px;width:26px;height:20px;background:#E6E6E6;"></div>
<div class="r" style="left:0px;top:239px;width:26px;height:1px;background:#D0D0D0;"></div>
<div class="t" style="left:-287.00px;width:600px;text-align:center;top:220.50px;font-size:13px;line-height:20px;color:#333333;font-weight:400;">12</div>
<div class="r" style="left:0px;top:240px;width:26px;height:20px;background:#E6E6E6;"></div>
<div class="r" style="left:0px;top:259px;width:26px;height:1px;background:#D0D0D0;"></div>
<div class="t" style="left:-287.00px;width:600px;text-align:center;top:240.50px;font-size:13px;line-height:20px;color:#333333;font-weight:400;">13</div>
<div class="r" style="left:0px;top:260px;width:26px;height:20px;background:#E6E6E6;"></div>
<div class="r" style="left:0px;top:279px;width:26px;height:1px;background:#D0D0D0;"></div>
<div class="t" style="left:-287.00px;width:600px;text-align:center;top:260.50px;font-size:13px;line-height:20px;color:#333333;font-weight:400;">14</div>
<div class="r" style="left:0px;top:280px;width:26px;height:20px;background:#E6E6E6;"></div>
<div class="r" style="left:0px;top:299px;width:26px;height:1px;background:#D0D0D0;"></div>
<div class="t" style="left:-287.00px;width:600px;text-align:center;top:280.50px;font-size:13px;line-height:20px;color:#333333;font-weight:400;">15</div>
<div class="r" style="left:0px;top:300px;width:26px;height:20px;background:#E6E6E6;"></div>
<div class="r" style="left:0px;top:319px;width:26px;height:1px;background:#D0D0D0;"></div>
<div class="t" style="left:-287.00px;width:600px;text-align:center;top:300.50px;font-size:13px;line-height:20px;color:#333333;font-weight:400;">16</div>
<div class="r" style="left:0px;top:320px;width:26px;height:20px;background:#E6E6E6;"></div>
<div class="r" style="left:0px;top:339px;width:26px;height:1px;background:#D0D0D0;"></div>
<div class="t" style="left:-287.00px;width:600px;text-align:center;top:320.50px;font-size:13px;line-height:20px;color:#333333;font-weight:400;">17</div>
<div class="r" style="left:0px;top:340px;width:26px;height:20px;background:#E6E6E6;"></div>
<div class="r" style="left:0px;top:359px;width:26px;height:1px;background:#D0D0D0;"></div>
<div class="t" style="left:-287.00px;width:600px;text-align:center;top:340.50px;font-size:13px;line-height:20px;color:#333333;font-weight:400;">18</div>
<div class="r" style="left:0px;top:360px;width:26px;height:20px;background:#E6E6E6;"></div>
<div class="r" style="left:0px;top:379px;width:26px;height:1px;background:#D0D0D0;"></div>
<div class="t" style="left:-287.00px;width:600px;text-align:center;top:360.50px;font-size:13px;line-height:20px;color:#333333;font-weight:400;">19</div>
<div class="r" style="left:0px;top:380px;width:26px;height:20px;background:#E6E6E6;"></div>
<div class="r" style="left:0px;top:399px;width:26px;height:1px;background:#D0D0D0;"></div>
<div class="t" style="left:-287.00px;width:600px;text-align:center;top:380.50px;font-size:13px;line-height:20px;color:#333333;font-weight:400;">20</div>
<div class="r" style="left:0px;top:400px;width:26px;height:20px;background:#E6E6E6;"></div>
<div class="r" style="left:0px;top:419px;width:26px;height:1px;background:#D0D0D0;"></div>
<div class="t" style="left:-287.00px;width:600px;text-align:center;top:400.50px;font-size:13px;line-height:20px;color:#333333;font-weight:400;">21</div>
<div class="r" style="left:0px;top:420px;width:26px;height:20px;background:#E6E6E6;"></div>
<div class="r" style="left:0px;top:439px;width:26px;height:1px;background:#D0D0D0;"></div>
<div class="r" style="left:25px;top:0px;width:1px;height:424px;background:#ABABAB;"></div>
<div class="r" style="left:26px;top:0px;width:1185px;height:20px;background:#4472C4;"></div>
<div class="r" style="left:26px;top:0px;width:264px;height:20px;overflow:hidden;">
<div class="t" style="left:1.5px;top:0.75px;font-size:14px;line-height:20px;color:#fff;font-weight:700;font-kerning:none;transform:scaleX(0.94);transform-origin:0 0;">Id</div>
</div>
<div class="r" style="left:272px;top:1px;width:17px;height:17px;background:linear-gradient(#FFFFFF,#F0F0F0);border:1px solid #ABABAB;box-sizing:border-box;"></div>
<svg class="r" style="left:276px;top:7px" width="9" height="6" viewBox="0 0 9 6"><path d="M0.5 0.5h8L4.5 4.8z" fill="#5A5A5A"/></svg>
<div class="r" style="left:290px;top:0px;width:194px;height:20px;overflow:hidden;">
<div class="t" style="left:1.5px;top:0.75px;font-size:14px;line-height:20px;color:#fff;font-weight:700;font-kerning:none;transform:scaleX(0.935);transform-origin:0 0;">UserPrincipalName</div>
</div>
<div class="r" style="left:466px;top:1px;width:17px;height:17px;background:linear-gradient(#FFFFFF,#F0F0F0);border:1px solid #ABABAB;box-sizing:border-box;"></div>
<svg class="r" style="left:470px;top:7px" width="9" height="6" viewBox="0 0 9 6"><path d="M0.5 0.5h8L4.5 4.8z" fill="#5A5A5A"/></svg>
<div class="r" style="left:484px;top:0px;width:143px;height:20px;overflow:hidden;">
<div class="t" style="left:1.5px;top:0.75px;font-size:14px;line-height:20px;color:#fff;font-weight:700;font-kerning:none;transform:scaleX(0.927);transform-origin:0 0;">UserDisplayName</div>
</div>
<div class="r" style="left:609px;top:1px;width:17px;height:17px;background:linear-gradient(#FFFFFF,#F0F0F0);border:1px solid #ABABAB;box-sizing:border-box;"></div>
<svg class="r" style="left:613px;top:7px" width="9" height="6" viewBox="0 0 9 6"><path d="M0.5 0.5h8L4.5 4.8z" fill="#5A5A5A"/></svg>
<div class="r" style="left:627px;top:0px;width:74px;height:20px;overflow:hidden;">
<div class="t" style="left:1.5px;top:0.75px;font-size:14px;line-height:20px;color:#fff;font-weight:700;font-kerning:none;transform:scaleX(0.924);transform-origin:0 0;">IsAdmin</div>
</div>
<div class="r" style="left:683px;top:1px;width:17px;height:17px;background:linear-gradient(#FFFFFF,#F0F0F0);border:1px solid #ABABAB;box-sizing:border-box;"></div>
<svg class="r" style="left:687px;top:7px" width="9" height="6" viewBox="0 0 9 6"><path d="M0.5 0.5h8L4.5 4.8z" fill="#5A5A5A"/></svg>
<div class="r" style="left:701px;top:0px;width:186px;height:20px;overflow:hidden;">
<div class="t" style="left:1.5px;top:0.75px;font-size:14px;line-height:20px;color:#fff;font-weight:700;font-kerning:none;transform:scaleX(0.99);transform-origin:0 0;">DefaultMfaMethod</div>
</div>
<div class="r" style="left:869px;top:1px;width:17px;height:17px;background:linear-gradient(#FFFFFF,#F0F0F0);border:1px solid #ABABAB;box-sizing:border-box;"></div>
<svg class="r" style="left:873px;top:7px" width="9" height="6" viewBox="0 0 9 6"><path d="M0.5 0.5h8L4.5 4.8z" fill="#5A5A5A"/></svg>
<div class="r" style="left:887px;top:0px;width:144px;height:20px;overflow:hidden;">
<div class="t" style="left:1.5px;top:0.75px;font-size:14px;line-height:20px;color:#fff;font-weight:700;font-kerning:none;transform:scaleX(0.942);transform-origin:0 0;">MethodsRegistered</div>
</div>
<div class="r" style="left:1013px;top:1px;width:17px;height:17px;background:linear-gradient(#FFFFFF,#F0F0F0);border:1px solid #ABABAB;box-sizing:border-box;"></div>
<svg class="r" style="left:1017px;top:7px" width="9" height="6" viewBox="0 0 9 6"><path d="M0.5 0.5h8L4.5 4.8z" fill="#5A5A5A"/></svg>
<div class="r" style="left:1031px;top:0px;width:106px;height:20px;overflow:hidden;">
<div class="t" style="left:1.5px;top:0.75px;font-size:14px;line-height:20px;color:#fff;font-weight:700;font-kerning:none;transform:scaleX(0.939);transform-origin:0 0;">IsMfaCapable</div>
</div>
<div class="r" style="left:1119px;top:1px;width:17px;height:17px;background:linear-gradient(#FFFFFF,#F0F0F0);border:1px solid #ABABAB;box-sizing:border-box;"></div>
<svg class="r" style="left:1123px;top:7px" width="9" height="6" viewBox="0 0 9 6"><path d="M0.5 0.5h8L4.5 4.8z" fill="#5A5A5A"/></svg>
<div class="r" style="left:1137px;top:0px;width:123px;height:20px;overflow:hidden;">
<div class="t" style="left:1.5px;top:0.75px;font-size:14px;line-height:20px;color:#fff;font-weight:700;font-kerning:none;transform:scaleX(0.94);transform-origin:0 0;">IsMfaRegistered</div>
</div>
<div class="r" style="left:26px;top:20px;width:1185px;height:19px;background:#D9E1F2;"></div>
<div class="r" style="left:26px;top:39px;width:1185px;height:1px;background:#8EA9DB;"></div>
<div class="r" style="left:26px;top:20px;width:263px;height:19px;overflow:hidden;">
<div class="t" style="left:1.3px;top:0.75px;font-size:14px;line-height:20px;color:#000;font-kerning:none;transform:scaleX(0.9562);transform-origin:0 0;">bf65c8c1-a855-403f-96db-47ecd9f81c2b</div>
</div>
<div class="r" style="left:290px;top:20px;width:193px;height:19px;overflow:hidden;">
<div class="t" style="left:1.3px;top:0.75px;font-size:14px;line-height:20px;color:#000;font-kerning:none;transform:scaleX(1.0117);transform-origin:0 0;">admin@exoip.com</div>
</div>
<div class="r" style="left:484px;top:20px;width:142px;height:19px;overflow:hidden;">
<div class="t" style="left:1.3px;top:0.75px;font-size:14px;line-height:20px;color:#000;font-kerning:none;transform:scaleX(1.0168);transform-origin:0 0;">Admin Tajran</div>
</div>
<div class="r" style="left:627px;top:20px;width:73px;height:19px;overflow:hidden;">
<div class="t" style="left:0;width:74px;text-align:center;top:0.75px;font-size:14px;line-height:20px;color:#000;font-kerning:none;transform:scaleX(0.8354);transform-origin:50% 0;">TRUE</div>
</div>
<div class="r" style="left:701px;top:20px;width:185px;height:19px;overflow:hidden;">
<div class="t" style="left:1.3px;top:0.75px;font-size:14px;line-height:20px;color:#000;font-kerning:none;transform:scaleX(1.0270);transform-origin:0 0;">microsoftAuthenticatorPush</div>
</div>
<div class="r" style="left:887px;top:20px;width:143px;height:19px;overflow:hidden;">
<div class="t" style="left:1.3px;top:0.75px;font-size:14px;line-height:20px;color:#000;font-kerning:none;transform:scaleX(1.0270);transform-origin:0 0;">microsoftAuthenticatorPush</div>
</div>
<div class="r" style="left:1031px;top:20px;width:105px;height:19px;overflow:hidden;">
<div class="t" style="left:0;width:106px;text-align:center;top:0.75px;font-size:14px;line-height:20px;color:#000;font-kerning:none;transform:scaleX(0.8354);transform-origin:50% 0;">TRUE</div>
</div>
<div class="r" style="left:1137px;top:20px;width:122px;height:19px;overflow:hidden;">
<div class="t" style="left:0;width:123px;text-align:center;top:0.75px;font-size:14px;line-height:20px;color:#000;font-kerning:none;transform:scaleX(0.8354);transform-origin:50% 0;">TRUE</div>
</div>
<div class="r" style="left:26px;top:40px;width:1185px;height:19px;background:#FFFFFF;"></div>
<div class="r" style="left:289px;top:40px;width:1px;height:19px;background:#D4D4D4;"></div>
<div class="r" style="left:483px;top:40px;width:1px;height:19px;background:#D4D4D4;"></div>
<div class="r" style="left:626px;top:40px;width:1px;height:19px;background:#D4D4D4;"></div>
<div class="r" style="left:700px;top:40px;width:1px;height:19px;background:#D4D4D4;"></div>
<div class="r" style="left:886px;top:40px;width:1px;height:19px;background:#D4D4D4;"></div>
<div class="r" style="left:1030px;top:40px;width:1px;height:19px;background:#D4D4D4;"></div>
<div class="r" style="left:1136px;top:40px;width:1px;height:19px;background:#D4D4D4;"></div>
<div class="r" style="left:26px;top:59px;width:1185px;height:1px;background:#8EA9DB;"></div>
<div class="r" style="left:26px;top:40px;width:263px;height:19px;overflow:hidden;">
<div class="t" style="left:1.3px;top:0.75px;font-size:14px;line-height:20px;color:#000;font-kerning:none;transform:scaleX(0.9510);transform-origin:0 0;">77f04d81-fdf0-4604-810a-3a90fe4030e3</div>
</div>
<div class="r" style="left:290px;top:40px;width:193px;height:19px;overflow:hidden;">
<div class="t" style="left:1.3px;top:0.75px;font-size:14px;line-height:20px;color:#000;font-kerning:none;transform:scaleX(0.9941);transform-origin:0 0;">Alison.Bell@exoip.com</div>
</div>
<div class="r" style="left:484px;top:40px;width:142px;height:19px;overflow:hidden;">
<div class="t" style="left:1.3px;top:0.75px;font-size:14px;line-height:20px;color:#000;font-kerning:none;transform:scaleX(0.9769);transform-origin:0 0;">Alison Bell</div>
</div>
<div class="r" style="left:627px;top:40px;width:73px;height:19px;overflow:hidden;">
<div class="t" style="left:0;width:74px;text-align:center;top:0.75px;font-size:14px;line-height:20px;color:#000;font-kerning:none;transform:scaleX(0.8138);transform-origin:50% 0;">FALSE</div>
</div>
<div class="r" style="left:701px;top:40px;width:185px;height:19px;overflow:hidden;">
<div class="t" style="left:1.3px;top:0.75px;font-size:14px;line-height:20px;color:#000;font-kerning:none;transform:scaleX(1.0270);transform-origin:0 0;">microsoftAuthenticatorPush</div>
</div>
<div class="r" style="left:887px;top:40px;width:143px;height:19px;overflow:hidden;">
<div class="t" style="left:1.3px;top:0.75px;font-size:14px;line-height:20px;color:#000;font-kerning:none;transform:scaleX(1.0270);transform-origin:0 0;">microsoftAuthenticatorPush</div>
</div>
<div class="r" style="left:1031px;top:40px;width:105px;height:19px;overflow:hidden;">
<div class="t" style="left:0;width:106px;text-align:center;top:0.75px;font-size:14px;line-height:20px;color:#000;font-kerning:none;transform:scaleX(0.8354);transform-origin:50% 0;">TRUE</div>
</div>
<div class="r" style="left:1137px;top:40px;width:122px;height:19px;overflow:hidden;">
<div class="t" style="left:0;width:123px;text-align:center;top:0.75px;font-size:14px;line-height:20px;color:#000;font-kerning:none;transform:scaleX(0.8354);transform-origin:50% 0;">TRUE</div>
</div>
<div class="r" style="left:26px;top:60px;width:1185px;height:19px;background:#D9E1F2;"></div>
<div class="r" style="left:26px;top:79px;width:1185px;height:1px;background:#8EA9DB;"></div>
<div class="r" style="left:26px;top:60px;width:263px;height:19px;overflow:hidden;">
<div class="t" style="left:1.3px;top:0.75px;font-size:14px;line-height:20px;color:#000;font-kerning:none;transform:scaleX(0.9503);transform-origin:0 0;">161511d4-86fa-41f8-93bd-2b9372a0246e</div>
</div>
<div class="r" style="left:290px;top:60px;width:193px;height:19px;overflow:hidden;">
<div class="t" style="left:1.3px;top:0.75px;font-size:14px;line-height:20px;color:#000;font-kerning:none;transform:scaleX(0.9975);transform-origin:0 0;">Alysia.Maverick@exoip.com</div>
</div>
<div class="r" style="left:484px;top:60px;width:142px;height:19px;overflow:hidden;">
<div class="t" style="left:1.3px;top:0.75px;font-size:14px;line-height:20px;color:#000;font-kerning:none;transform:scaleX(0.9886);transform-origin:0 0;">Alysia Maverick</div>
</div>
<div class="r" style="left:627px;top:60px;width:73px;height:19px;overflow:hidden;">
<div class="t" style="left:0;width:74px;text-align:center;top:0.75px;font-size:14px;line-height:20px;color:#000;font-kerning:none;transform:scaleX(0.8138);transform-origin:50% 0;">FALSE</div>
</div>
<div class="r" style="left:701px;top:60px;width:185px;height:19px;overflow:hidden;">
<div class="t" style="left:1.3px;top:0.75px;font-size:14px;line-height:20px;color:#000;font-kerning:none;transform:scaleX(1.0219);transform-origin:0 0;">none</div>
</div>
<div class="r" style="left:1031px;top:60px;width:105px;height:19px;overflow:hidden;">
<div class="t" style="left:0;width:106px;text-align:center;top:0.75px;font-size:14px;line-height:20px;color:#000;font-kerning:none;transform:scaleX(0.8138);transform-origin:50% 0;">FALSE</div>
</div>
<div class="r" style="left:1137px;top:60px;width:122px;height:19px;overflow:hidden;">
<div class="t" style="left:0;width:123px;text-align:center;top:0.75px;font-size:14px;line-height:20px;color:#000;font-kerning:none;transform:scaleX(0.8138);transform-origin:50% 0;">FALSE</div>
</div>
<div class="r" style="left:26px;top:80px;width:1185px;height:19px;background:#FFFFFF;"></div>
<div class="r" style="left:289px;top:80px;width:1px;height:19px;background:#D4D4D4;"></div>
<div class="r" style="left:483px;top:80px;width:1px;height:19px;background:#D4D4D4;"></div>
<div class="r" style="left:626px;top:80px;width:1px;height:19px;background:#D4D4D4;"></div>
<div class="r" style="left:700px;top:80px;width:1px;height:19px;background:#D4D4D4;"></div>
<div class="r" style="left:886px;top:80px;width:1px;height:19px;background:#D4D4D4;"></div>
<div class="r" style="left:1030px;top:80px;width:1px;height:19px;background:#D4D4D4;"></div>
<div class="r" style="left:1136px;top:80px;width:1px;height:19px;background:#D4D4D4;"></div>
<div class="r" style="left:26px;top:99px;width:1185px;height:1px;background:#8EA9DB;"></div>
<div class="r" style="left:26px;top:80px;width:263px;height:19px;overflow:hidden;">
<div class="t" style="left:1.3px;top:0.75px;font-size:14px;line-height:20px;color:#000;font-kerning:none;transform:scaleX(0.9466);transform-origin:0 0;">944d57a0-0d24-4d55-ac5b-e9b741be9031</div>
</div>
<div class="r" style="left:290px;top:80px;width:193px;height:19px;overflow:hidden;">
<div class="t" style="left:1.3px;top:0.75px;font-size:14px;line-height:20px;color:#000;font-kerning:none;transform:scaleX(1.0048);transform-origin:0 0;">Amanda.Morgan@exoip.com</div>
</div>
<div class="r" style="left:484px;top:80px;width:142px;height:19px;overflow:hidden;">
<div class="t" style="left:1.3px;top:0.75px;font-size:14px;line-height:20px;color:#000;font-kerning:none;transform:scaleX(1.0019);transform-origin:0 0;">Amanda Morgan</div>
</div>
<div class="r" style="left:627px;top:80px;width:73px;height:19px;overflow:hidden;">
<div class="t" style="left:0;width:74px;text-align:center;top:0.75px;font-size:14px;line-height:20px;color:#000;font-kerning:none;transform:scaleX(0.8138);transform-origin:50% 0;">FALSE</div>
</div>
<div class="r" style="left:701px;top:80px;width:185px;height:19px;overflow:hidden;">
<div class="t" style="left:1.3px;top:0.75px;font-size:14px;line-height:20px;color:#000;font-kerning:none;transform:scaleX(1.0270);transform-origin:0 0;">microsoftAuthenticatorPush</div>
</div>
<div class="r" style="left:887px;top:80px;width:143px;height:19px;overflow:hidden;">
<div class="t" style="left:1.3px;top:0.75px;font-size:14px;line-height:20px;color:#000;font-kerning:none;transform:scaleX(1.0208);transform-origin:0 0;">mobilePhone,microsoftAuthenticatorPush</div>
</div>
<div class="r" style="left:1031px;top:80px;width:105px;height:19px;overflow:hidden;">
<div class="t" style="left:0;width:106px;text-align:center;top:0.75px;font-size:14px;line-height:20px;color:#000;font-kerning:none;transform:scaleX(0.8354);transform-origin:50% 0;">TRUE</div>
</div>
<div class="r" style="left:1137px;top:80px;width:122px;height:19px;overflow:hidden;">
<div class="t" style="left:0;width:123px;text-align:center;top:0.75px;font-size:14px;line-height:20px;color:#000;font-kerning:none;transform:scaleX(0.8354);transform-origin:50% 0;">TRUE</div>
</div>
<div class="r" style="left:26px;top:100px;width:1185px;height:19px;background:#D9E1F2;"></div>
<div class="r" style="left:26px;top:119px;width:1185px;height:1px;background:#8EA9DB;"></div>
<div class="r" style="left:26px;top:100px;width:263px;height:19px;overflow:hidden;">
<div class="t" style="left:1.3px;top:0.75px;font-size:14px;line-height:20px;color:#000;font-kerning:none;transform:scaleX(0.9479);transform-origin:0 0;">4b350521-7006-4a9d-ab11-9127fa9563db</div>
</div>
<div class="r" style="left:290px;top:100px;width:193px;height:19px;overflow:hidden;">
<div class="t" style="left:1.3px;top:0.75px;font-size:14px;line-height:20px;color:#000;font-kerning:none;transform:scaleX(0.9908);transform-origin:0 0;">Boris.Campbell@exoip.com</div>
</div>
<div class="r" style="left:484px;top:100px;width:142px;height:19px;overflow:hidden;">
<div class="t" style="left:1.3px;top:0.75px;font-size:14px;line-height:20px;color:#000;font-kerning:none;transform:scaleX(0.9762);transform-origin:0 0;">Boris Campbell</div>
</div>
<div class="r" style="left:627px;top:100px;width:73px;height:19px;overflow:hidden;">
<div class="t" style="left:0;width:74px;text-align:center;top:0.75px;font-size:14px;line-height:20px;color:#000;font-kerning:none;transform:scaleX(0.8138);transform-origin:50% 0;">FALSE</div>
</div>
<div class="r" style="left:701px;top:100px;width:185px;height:19px;overflow:hidden;">
<div class="t" style="left:1.3px;top:0.75px;font-size:14px;line-height:20px;color:#000;font-kerning:none;transform:scaleX(1.0219);transform-origin:0 0;">none</div>
</div>
<div class="r" style="left:1031px;top:100px;width:105px;height:19px;overflow:hidden;">
<div class="t" style="left:0;width:106px;text-align:center;top:0.75px;font-size:14px;line-height:20px;color:#000;font-kerning:none;transform:scaleX(0.8138);transform-origin:50% 0;">FALSE</div>
</div>
<div class="r" style="left:1137px;top:100px;width:122px;height:19px;overflow:hidden;">
<div class="t" style="left:0;width:123px;text-align:center;top:0.75px;font-size:14px;line-height:20px;color:#000;font-kerning:none;transform:scaleX(0.8138);transform-origin:50% 0;">FALSE</div>
</div>
<div class="r" style="left:26px;top:120px;width:1185px;height:19px;background:#FFFFFF;"></div>
<div class="r" style="left:289px;top:120px;width:1px;height:19px;background:#D4D4D4;"></div>
<div class="r" style="left:483px;top:120px;width:1px;height:19px;background:#D4D4D4;"></div>
<div class="r" style="left:626px;top:120px;width:1px;height:19px;background:#D4D4D4;"></div>
<div class="r" style="left:700px;top:120px;width:1px;height:19px;background:#D4D4D4;"></div>
<div class="r" style="left:886px;top:120px;width:1px;height:19px;background:#D4D4D4;"></div>
<div class="r" style="left:1030px;top:120px;width:1px;height:19px;background:#D4D4D4;"></div>
<div class="r" style="left:1136px;top:120px;width:1px;height:19px;background:#D4D4D4;"></div>
<div class="r" style="left:26px;top:139px;width:1185px;height:1px;background:#8EA9DB;"></div>
<div class="r" style="left:26px;top:120px;width:263px;height:19px;overflow:hidden;">
<div class="t" style="left:1.3px;top:0.75px;font-size:14px;line-height:20px;color:#000;font-kerning:none;transform:scaleX(0.9426);transform-origin:0 0;">76ddaa00-9564-48b5-98a9-2e92f15126b6</div>
</div>
<div class="r" style="left:290px;top:120px;width:193px;height:19px;overflow:hidden;">
<div class="t" style="left:1.3px;top:0.75px;font-size:14px;line-height:20px;color:#000;font-kerning:none;transform:scaleX(0.9941);transform-origin:0 0;">Carol.Grant@exoip.com</div>
</div>
<div class="r" style="left:484px;top:120px;width:142px;height:19px;overflow:hidden;">
<div class="t" style="left:1.3px;top:0.75px;font-size:14px;line-height:20px;color:#000;font-kerning:none;transform:scaleX(0.9785);transform-origin:0 0;">Carol Grant</div>
</div>
<div class="r" style="left:627px;top:120px;width:73px;height:19px;overflow:hidden;">
<div class="t" style="left:0;width:74px;text-align:center;top:0.75px;font-size:14px;line-height:20px;color:#000;font-kerning:none;transform:scaleX(0.8138);transform-origin:50% 0;">FALSE</div>
</div>
<div class="r" style="left:701px;top:120px;width:185px;height:19px;overflow:hidden;">
<div class="t" style="left:1.3px;top:0.75px;font-size:14px;line-height:20px;color:#000;font-kerning:none;transform:scaleX(1.0219);transform-origin:0 0;">none</div>
</div>
<div class="r" style="left:1031px;top:120px;width:105px;height:19px;overflow:hidden;">
<div class="t" style="left:0;width:106px;text-align:center;top:0.75px;font-size:14px;line-height:20px;color:#000;font-kerning:none;transform:scaleX(0.8138);transform-origin:50% 0;">FALSE</div>
</div>
<div class="r" style="left:1137px;top:120px;width:122px;height:19px;overflow:hidden;">
<div class="t" style="left:0;width:123px;text-align:center;top:0.75px;font-size:14px;line-height:20px;color:#000;font-kerning:none;transform:scaleX(0.8138);transform-origin:50% 0;">FALSE</div>
</div>
<div class="r" style="left:26px;top:140px;width:1185px;height:19px;background:#D9E1F2;"></div>
<div class="r" style="left:26px;top:159px;width:1185px;height:1px;background:#8EA9DB;"></div>
<div class="r" style="left:26px;top:140px;width:263px;height:19px;overflow:hidden;">
<div class="t" style="left:1.3px;top:0.75px;font-size:14px;line-height:20px;color:#000;font-kerning:none;transform:scaleX(0.9475);transform-origin:0 0;">b514a097-7fc6-49f8-a26a-778bd7c5f910</div>
</div>
<div class="r" style="left:290px;top:140px;width:193px;height:19px;overflow:hidden;">
<div class="t" style="left:1.3px;top:0.75px;font-size:14px;line-height:20px;color:#000;font-kerning:none;transform:scaleX(0.9877);transform-origin:0 0;">Leonard.Clark@exoip.com</div>
</div>
<div class="r" style="left:484px;top:140px;width:142px;height:19px;overflow:hidden;">
<div class="t" style="left:1.3px;top:0.75px;font-size:14px;line-height:20px;color:#000;font-kerning:none;transform:scaleX(0.9697);transform-origin:0 0;">Clark, Leonard</div>
</div>
<div class="r" style="left:627px;top:140px;width:73px;height:19px;overflow:hidden;">
<div class="t" style="left:0;width:74px;text-align:center;top:0.75px;font-size:14px;line-height:20px;color:#000;font-kerning:none;transform:scaleX(0.8138);transform-origin:50% 0;">FALSE</div>
</div>
<div class="r" style="left:701px;top:140px;width:185px;height:19px;overflow:hidden;">
<div class="t" style="left:1.3px;top:0.75px;font-size:14px;line-height:20px;color:#000;font-kerning:none;transform:scaleX(1.0219);transform-origin:0 0;">none</div>
</div>
<div class="r" style="left:1031px;top:140px;width:105px;height:19px;overflow:hidden;">
<div class="t" style="left:0;width:106px;text-align:center;top:0.75px;font-size:14px;line-height:20px;color:#000;font-kerning:none;transform:scaleX(0.8138);transform-origin:50% 0;">FALSE</div>
</div>
<div class="r" style="left:1137px;top:140px;width:122px;height:19px;overflow:hidden;">
<div class="t" style="left:0;width:123px;text-align:center;top:0.75px;font-size:14px;line-height:20px;color:#000;font-kerning:none;transform:scaleX(0.8138);transform-origin:50% 0;">FALSE</div>
</div>
<div class="r" style="left:26px;top:160px;width:1185px;height:19px;background:#FFFFFF;"></div>
<div class="r" style="left:289px;top:160px;width:1px;height:19px;background:#D4D4D4;"></div>
<div class="r" style="left:483px;top:160px;width:1px;height:19px;background:#D4D4D4;"></div>
<div class="r" style="left:626px;top:160px;width:1px;height:19px;background:#D4D4D4;"></div>
<div class="r" style="left:700px;top:160px;width:1px;height:19px;background:#D4D4D4;"></div>
<div class="r" style="left:886px;top:160px;width:1px;height:19px;background:#D4D4D4;"></div>
<div class="r" style="left:1030px;top:160px;width:1px;height:19px;background:#D4D4D4;"></div>
<div class="r" style="left:1136px;top:160px;width:1px;height:19px;background:#D4D4D4;"></div>
<div class="r" style="left:26px;top:179px;width:1185px;height:1px;background:#8EA9DB;"></div>
<div class="r" style="left:26px;top:160px;width:263px;height:19px;overflow:hidden;">
<div class="t" style="left:1.3px;top:0.75px;font-size:14px;line-height:20px;color:#000;font-kerning:none;transform:scaleX(0.9697);transform-origin:0 0;">9df8ef88-4ffe-4d91-8f4f-ccde7147a6a2</div>
</div>
<div class="r" style="left:290px;top:160px;width:193px;height:19px;overflow:hidden;">
<div class="t" style="left:1.3px;top:0.75px;font-size:14px;line-height:20px;color:#000;font-kerning:none;transform:scaleX(0.9959);transform-origin:0 0;">Edward.Lincoln@exoip.com</div>
</div>
<div class="r" style="left:484px;top:160px;width:142px;height:19px;overflow:hidden;">
<div class="t" style="left:1.3px;top:0.75px;font-size:14px;line-height:20px;color:#000;font-kerning:none;transform:scaleX(0.9856);transform-origin:0 0;">Edward Lincoln</div>
</div>
<div class="r" style="left:627px;top:160px;width:73px;height:19px;overflow:hidden;">
<div class="t" style="left:0;width:74px;text-align:center;top:0.75px;font-size:14px;line-height:20px;color:#000;font-kerning:none;transform:scaleX(0.8138);transform-origin:50% 0;">FALSE</div>
</div>
<div class="r" style="left:701px;top:160px;width:185px;height:19px;overflow:hidden;">
<div class="t" style="left:1.3px;top:0.75px;font-size:14px;line-height:20px;color:#000;font-kerning:none;transform:scaleX(1.0219);transform-origin:0 0;">none</div>
</div>
<div class="r" style="left:1031px;top:160px;width:105px;height:19px;overflow:hidden;">
<div class="t" style="left:0;width:106px;text-align:center;top:0.75px;font-size:14px;line-height:20px;color:#000;font-kerning:none;transform:scaleX(0.8138);transform-origin:50% 0;">FALSE</div>
</div>
<div class="r" style="left:1137px;top:160px;width:122px;height:19px;overflow:hidden;">
<div class="t" style="left:0;width:123px;text-align:center;top:0.75px;font-size:14px;line-height:20px;color:#000;font-kerning:none;transform:scaleX(0.8138);transform-origin:50% 0;">FALSE</div>
</div>
<div class="r" style="left:26px;top:180px;width:1185px;height:19px;background:#D9E1F2;"></div>
<div class="r" style="left:26px;top:199px;width:1185px;height:1px;background:#8EA9DB;"></div>
<div class="r" style="left:26px;top:180px;width:263px;height:19px;overflow:hidden;">
<div class="t" style="left:1.3px;top:0.75px;font-size:14px;line-height:20px;color:#000;font-kerning:none;transform:scaleX(0.9417);transform-origin:0 0;">78a6445a-badc-4886-a880-7c22a21f1af4</div>
</div>
<div class="r" style="left:290px;top:180px;width:193px;height:19px;overflow:hidden;">
<div class="t" style="left:1.3px;top:0.75px;font-size:14px;line-height:20px;color:#000;font-kerning:none;transform:scaleX(0.9990);transform-origin:0 0;">Fiona.Marshall@exoip.com</div>
</div>
<div class="r" style="left:484px;top:180px;width:142px;height:19px;overflow:hidden;">
<div class="t" style="left:1.3px;top:0.75px;font-size:14px;line-height:20px;color:#000;font-kerning:none;transform:scaleX(0.9908);transform-origin:0 0;">Fiona Marshall</div>
</div>
<div class="r" style="left:627px;top:180px;width:73px;height:19px;overflow:hidden;">
<div class="t" style="left:0;width:74px;text-align:center;top:0.75px;font-size:14px;line-height:20px;color:#000;font-kerning:none;transform:scaleX(0.8138);transform-origin:50% 0;">FALSE</div>
</div>
<div class="r" style="left:701px;top:180px;width:185px;height:19px;overflow:hidden;">
<div class="t" style="left:1.3px;top:0.75px;font-size:14px;line-height:20px;color:#000;font-kerning:none;transform:scaleX(1.0219);transform-origin:0 0;">none</div>
</div>
<div class="r" style="left:1031px;top:180px;width:105px;height:19px;overflow:hidden;">
<div class="t" style="left:0;width:106px;text-align:center;top:0.75px;font-size:14px;line-height:20px;color:#000;font-kerning:none;transform:scaleX(0.8138);transform-origin:50% 0;">FALSE</div>
</div>
<div class="r" style="left:1137px;top:180px;width:122px;height:19px;overflow:hidden;">
<div class="t" style="left:0;width:123px;text-align:center;top:0.75px;font-size:14px;line-height:20px;color:#000;font-kerning:none;transform:scaleX(0.8138);transform-origin:50% 0;">FALSE</div>
</div>
<div class="r" style="left:26px;top:200px;width:1185px;height:19px;background:#FFFFFF;"></div>
<div class="r" style="left:289px;top:200px;width:1px;height:19px;background:#D4D4D4;"></div>
<div class="r" style="left:483px;top:200px;width:1px;height:19px;background:#D4D4D4;"></div>
<div class="r" style="left:626px;top:200px;width:1px;height:19px;background:#D4D4D4;"></div>
<div class="r" style="left:700px;top:200px;width:1px;height:19px;background:#D4D4D4;"></div>
<div class="r" style="left:886px;top:200px;width:1px;height:19px;background:#D4D4D4;"></div>
<div class="r" style="left:1030px;top:200px;width:1px;height:19px;background:#D4D4D4;"></div>
<div class="r" style="left:1136px;top:200px;width:1px;height:19px;background:#D4D4D4;"></div>
<div class="r" style="left:26px;top:219px;width:1185px;height:1px;background:#8EA9DB;"></div>
<div class="r" style="left:26px;top:200px;width:263px;height:19px;overflow:hidden;">
<div class="t" style="left:1.3px;top:0.75px;font-size:14px;line-height:20px;color:#000;font-kerning:none;transform:scaleX(0.9672);transform-origin:0 0;">afdaf3b4-7c82-4aea-8a0c-4d0dafde527f</div>
</div>
<div class="r" style="left:290px;top:200px;width:193px;height:19px;overflow:hidden;">
<div class="t" style="left:1.3px;top:0.75px;font-size:14px;line-height:20px;color:#000;font-kerning:none;transform:scaleX(0.9891);transform-origin:0 0;">Max.Fraser@exoip.com</div>
</div>
<div class="r" style="left:484px;top:200px;width:142px;height:19px;overflow:hidden;">
<div class="t" style="left:1.3px;top:0.75px;font-size:14px;line-height:20px;color:#000;font-kerning:none;transform:scaleX(0.9785);transform-origin:0 0;">Fraser, Max</div>
</div>
<div class="r" style="left:627px;top:200px;width:73px;height:19px;overflow:hidden;">
<div class="t" style="left:0;width:74px;text-align:center;top:0.75px;font-size:14px;line-height:20px;color:#000;font-kerning:none;transform:scaleX(0.8138);transform-origin:50% 0;">FALSE</div>
</div>
<div class="r" style="left:701px;top:200px;width:185px;height:19px;overflow:hidden;">
<div class="t" style="left:1.3px;top:0.75px;font-size:14px;line-height:20px;color:#000;font-kerning:none;transform:scaleX(1.0219);transform-origin:0 0;">none</div>
</div>
<div class="r" style="left:1031px;top:200px;width:105px;height:19px;overflow:hidden;">
<div class="t" style="left:0;width:106px;text-align:center;top:0.75px;font-size:14px;line-height:20px;color:#000;font-kerning:none;transform:scaleX(0.8138);transform-origin:50% 0;">FALSE</div>
</div>
<div class="r" style="left:1137px;top:200px;width:122px;height:19px;overflow:hidden;">
<div class="t" style="left:0;width:123px;text-align:center;top:0.75px;font-size:14px;line-height:20px;color:#000;font-kerning:none;transform:scaleX(0.8138);transform-origin:50% 0;">FALSE</div>
</div>
<div class="r" style="left:26px;top:220px;width:1185px;height:19px;background:#D9E1F2;"></div>
<div class="r" style="left:26px;top:239px;width:1185px;height:1px;background:#8EA9DB;"></div>
<div class="r" style="left:26px;top:220px;width:263px;height:19px;overflow:hidden;">
<div class="t" style="left:1.3px;top:0.75px;font-size:14px;line-height:20px;color:#000;font-kerning:none;transform:scaleX(0.9565);transform-origin:0 0;">1d76ad79-5823-4a24-833f-fbfbe57f2455</div>
</div>
<div class="r" style="left:290px;top:220px;width:193px;height:19px;overflow:hidden;">
<div class="t" style="left:1.3px;top:0.75px;font-size:14px;line-height:20px;color:#000;font-kerning:none;transform:scaleX(0.9660);transform-origin:0 0;">Grace.Rees@exoip.com</div>
</div>
<div class="r" style="left:484px;top:220px;width:142px;height:19px;overflow:hidden;">
<div class="t" style="left:1.3px;top:0.75px;font-size:14px;line-height:20px;color:#000;font-kerning:none;transform:scaleX(0.9214);transform-origin:0 0;">Grace Rees</div>
</div>
<div class="r" style="left:627px;top:220px;width:73px;height:19px;overflow:hidden;">
<div class="t" style="left:0;width:74px;text-align:center;top:0.75px;font-size:14px;line-height:20px;color:#000;font-kerning:none;transform:scaleX(0.8138);transform-origin:50% 0;">FALSE</div>
</div>
<div class="r" style="left:701px;top:220px;width:185px;height:19px;overflow:hidden;">
<div class="t" style="left:1.3px;top:0.75px;font-size:14px;line-height:20px;color:#000;font-kerning:none;transform:scaleX(1.0219);transform-origin:0 0;">none</div>
</div>
<div class="r" style="left:1031px;top:220px;width:105px;height:19px;overflow:hidden;">
<div class="t" style="left:0;width:106px;text-align:center;top:0.75px;font-size:14px;line-height:20px;color:#000;font-kerning:none;transform:scaleX(0.8138);transform-origin:50% 0;">FALSE</div>
</div>
<div class="r" style="left:1137px;top:220px;width:122px;height:19px;overflow:hidden;">
<div class="t" style="left:0;width:123px;text-align:center;top:0.75px;font-size:14px;line-height:20px;color:#000;font-kerning:none;transform:scaleX(0.8138);transform-origin:50% 0;">FALSE</div>
</div>
<div class="r" style="left:26px;top:240px;width:1185px;height:19px;background:#FFFFFF;"></div>
<div class="r" style="left:289px;top:240px;width:1px;height:19px;background:#D4D4D4;"></div>
<div class="r" style="left:483px;top:240px;width:1px;height:19px;background:#D4D4D4;"></div>
<div class="r" style="left:626px;top:240px;width:1px;height:19px;background:#D4D4D4;"></div>
<div class="r" style="left:700px;top:240px;width:1px;height:19px;background:#D4D4D4;"></div>
<div class="r" style="left:886px;top:240px;width:1px;height:19px;background:#D4D4D4;"></div>
<div class="r" style="left:1030px;top:240px;width:1px;height:19px;background:#D4D4D4;"></div>
<div class="r" style="left:1136px;top:240px;width:1px;height:19px;background:#D4D4D4;"></div>
<div class="r" style="left:26px;top:259px;width:1185px;height:1px;background:#8EA9DB;"></div>
<div class="r" style="left:26px;top:240px;width:263px;height:19px;overflow:hidden;">
<div class="t" style="left:1.3px;top:0.75px;font-size:14px;line-height:20px;color:#000;font-kerning:none;transform:scaleX(0.9385);transform-origin:0 0;">03e95a20-3652-4895-af25-6deed0856081</div>
</div>
<div class="r" style="left:290px;top:240px;width:193px;height:19px;overflow:hidden;">
<div class="t" style="left:1.3px;top:0.75px;font-size:14px;line-height:20px;color:#000;font-kerning:none;transform:scaleX(0.9938);transform-origin:0 0;">Richard.Grant@exoip.com</div>
</div>
<div class="r" style="left:484px;top:240px;width:142px;height:19px;overflow:hidden;">
<div class="t" style="left:1.3px;top:0.75px;font-size:14px;line-height:20px;color:#000;font-kerning:none;transform:scaleX(0.9807);transform-origin:0 0;">Grant, Richard</div>
</div>
<div class="r" style="left:627px;top:240px;width:73px;height:19px;overflow:hidden;">
<div class="t" style="left:0;width:74px;text-align:center;top:0.75px;font-size:14px;line-height:20px;color:#000;font-kerning:none;transform:scaleX(0.8138);transform-origin:50% 0;">FALSE</div>
</div>
<div class="r" style="left:701px;top:240px;width:185px;height:19px;overflow:hidden;">
<div class="t" style="left:1.3px;top:0.75px;font-size:14px;line-height:20px;color:#000;font-kerning:none;transform:scaleX(1.0219);transform-origin:0 0;">none</div>
</div>
<div class="r" style="left:1031px;top:240px;width:105px;height:19px;overflow:hidden;">
<div class="t" style="left:0;width:106px;text-align:center;top:0.75px;font-size:14px;line-height:20px;color:#000;font-kerning:none;transform:scaleX(0.8138);transform-origin:50% 0;">FALSE</div>
</div>
<div class="r" style="left:1137px;top:240px;width:122px;height:19px;overflow:hidden;">
<div class="t" style="left:0;width:123px;text-align:center;top:0.75px;font-size:14px;line-height:20px;color:#000;font-kerning:none;transform:scaleX(0.8138);transform-origin:50% 0;">FALSE</div>
</div>
<div class="r" style="left:26px;top:260px;width:1185px;height:19px;background:#D9E1F2;"></div>
<div class="r" style="left:26px;top:279px;width:1185px;height:1px;background:#8EA9DB;"></div>
<div class="r" style="left:26px;top:260px;width:263px;height:19px;overflow:hidden;">
<div class="t" style="left:1.3px;top:0.75px;font-size:14px;line-height:20px;color:#000;font-kerning:none;transform:scaleX(0.9576);transform-origin:0 0;">933c0fb2-55e2-481c-aadb-0e0c900fbfec</div>
</div>
<div class="r" style="left:290px;top:260px;width:193px;height:19px;overflow:hidden;">
<div class="t" style="left:1.3px;top:0.75px;font-size:14px;line-height:20px;color:#000;font-kerning:none;transform:scaleX(1.0202);transform-origin:0 0;">info@exoip.com</div>
</div>
<div class="r" style="left:484px;top:260px;width:142px;height:19px;overflow:hidden;">
<div class="t" style="left:1.3px;top:0.75px;font-size:14px;line-height:20px;color:#000;font-kerning:none;transform:scaleX(1.0319);transform-origin:0 0;">Info | Exoip</div>
</div>
<div class="r" style="left:627px;top:260px;width:73px;height:19px;overflow:hidden;">
<div class="t" style="left:0;width:74px;text-align:center;top:0.75px;font-size:14px;line-height:20px;color:#000;font-kerning:none;transform:scaleX(0.8138);transform-origin:50% 0;">FALSE</div>
</div>
<div class="r" style="left:701px;top:260px;width:185px;height:19px;overflow:hidden;">
<div class="t" style="left:1.3px;top:0.75px;font-size:14px;line-height:20px;color:#000;font-kerning:none;transform:scaleX(1.0219);transform-origin:0 0;">none</div>
</div>
<div class="r" style="left:1031px;top:260px;width:105px;height:19px;overflow:hidden;">
<div class="t" style="left:0;width:106px;text-align:center;top:0.75px;font-size:14px;line-height:20px;color:#000;font-kerning:none;transform:scaleX(0.8138);transform-origin:50% 0;">FALSE</div>
</div>
<div class="r" style="left:1137px;top:260px;width:122px;height:19px;overflow:hidden;">
<div class="t" style="left:0;width:123px;text-align:center;top:0.75px;font-size:14px;line-height:20px;color:#000;font-kerning:none;transform:scaleX(0.8138);transform-origin:50% 0;">FALSE</div>
</div>
<div class="r" style="left:26px;top:280px;width:1185px;height:19px;background:#FFFFFF;"></div>
<div class="r" style="left:289px;top:280px;width:1px;height:19px;background:#D4D4D4;"></div>
<div class="r" style="left:483px;top:280px;width:1px;height:19px;background:#D4D4D4;"></div>
<div class="r" style="left:626px;top:280px;width:1px;height:19px;background:#D4D4D4;"></div>
<div class="r" style="left:700px;top:280px;width:1px;height:19px;background:#D4D4D4;"></div>
<div class="r" style="left:886px;top:280px;width:1px;height:19px;background:#D4D4D4;"></div>
<div class="r" style="left:1030px;top:280px;width:1px;height:19px;background:#D4D4D4;"></div>
<div class="r" style="left:1136px;top:280px;width:1px;height:19px;background:#D4D4D4;"></div>
<div class="r" style="left:26px;top:299px;width:1185px;height:1px;background:#8EA9DB;"></div>
<div class="r" style="left:26px;top:280px;width:263px;height:19px;overflow:hidden;">
<div class="t" style="left:1.3px;top:0.75px;font-size:14px;line-height:20px;color:#000;font-kerning:none;transform:scaleX(0.9379);transform-origin:0 0;">2463e00a-2ef2-4938-9600-f5bc2cc16222</div>
</div>
<div class="r" style="left:290px;top:280px;width:193px;height:19px;overflow:hidden;">
<div class="t" style="left:1.3px;top:0.75px;font-size:14px;line-height:20px;color:#000;font-kerning:none;transform:scaleX(1.0080);transform-origin:0 0;">Jeffrey.Welch@exoip.com</div>
</div>
<div class="r" style="left:484px;top:280px;width:142px;height:19px;overflow:hidden;">
<div class="t" style="left:1.3px;top:0.75px;font-size:14px;line-height:20px;color:#000;font-kerning:none;transform:scaleX(0.9950);transform-origin:0 0;">Jeffrey Welch</div>
</div>
<div class="r" style="left:627px;top:280px;width:73px;height:19px;overflow:hidden;">
<div class="t" style="left:0;width:74px;text-align:center;top:0.75px;font-size:14px;line-height:20px;color:#000;font-kerning:none;transform:scaleX(0.8138);transform-origin:50% 0;">FALSE</div>
</div>
<div class="r" style="left:701px;top:280px;width:185px;height:19px;overflow:hidden;">
<div class="t" style="left:1.3px;top:0.75px;font-size:14px;line-height:20px;color:#000;font-kerning:none;transform:scaleX(1.0219);transform-origin:0 0;">none</div>
</div>
<div class="r" style="left:1031px;top:280px;width:105px;height:19px;overflow:hidden;">
<div class="t" style="left:0;width:106px;text-align:center;top:0.75px;font-size:14px;line-height:20px;color:#000;font-kerning:none;transform:scaleX(0.8138);transform-origin:50% 0;">FALSE</div>
</div>
<div class="r" style="left:1137px;top:280px;width:122px;height:19px;overflow:hidden;">
<div class="t" style="left:0;width:123px;text-align:center;top:0.75px;font-size:14px;line-height:20px;color:#000;font-kerning:none;transform:scaleX(0.8138);transform-origin:50% 0;">FALSE</div>
</div>
<div class="r" style="left:26px;top:300px;width:1185px;height:19px;background:#D9E1F2;"></div>
<div class="r" style="left:26px;top:319px;width:1185px;height:1px;background:#8EA9DB;"></div>
<div class="r" style="left:26px;top:300px;width:263px;height:19px;overflow:hidden;">
<div class="t" style="left:1.3px;top:0.75px;font-size:14px;line-height:20px;color:#000;font-kerning:none;transform:scaleX(0.9369);transform-origin:0 0;">8056e123-4078-474f-bdea-12a4393c8450</div>
</div>
<div class="r" style="left:290px;top:300px;width:193px;height:19px;overflow:hidden;">
<div class="t" style="left:1.3px;top:0.75px;font-size:14px;line-height:20px;color:#000;font-kerning:none;transform:scaleX(0.9976);transform-origin:0 0;">John.Maverick@exoip.com</div>
</div>
<div class="r" style="left:484px;top:300px;width:142px;height:19px;overflow:hidden;">
<div class="t" style="left:1.3px;top:0.75px;font-size:14px;line-height:20px;color:#000;font-kerning:none;transform:scaleX(0.9881);transform-origin:0 0;">John Maverick</div>
</div>
<div class="r" style="left:627px;top:300px;width:73px;height:19px;overflow:hidden;">
<div class="t" style="left:0;width:74px;text-align:center;top:0.75px;font-size:14px;line-height:20px;color:#000;font-kerning:none;transform:scaleX(0.8138);transform-origin:50% 0;">FALSE</div>
</div>
<div class="r" style="left:701px;top:300px;width:185px;height:19px;overflow:hidden;">
<div class="t" style="left:1.3px;top:0.75px;font-size:14px;line-height:20px;color:#000;font-kerning:none;transform:scaleX(1.0219);transform-origin:0 0;">none</div>
</div>
<div class="r" style="left:1031px;top:300px;width:105px;height:19px;overflow:hidden;">
<div class="t" style="left:0;width:106px;text-align:center;top:0.75px;font-size:14px;line-height:20px;color:#000;font-kerning:none;transform:scaleX(0.8138);transform-origin:50% 0;">FALSE</div>
</div>
<div class="r" style="left:1137px;top:300px;width:122px;height:19px;overflow:hidden;">
<div class="t" style="left:0;width:123px;text-align:center;top:0.75px;font-size:14px;line-height:20px;color:#000;font-kerning:none;transform:scaleX(0.8138);transform-origin:50% 0;">FALSE</div>
</div>
<div class="r" style="left:26px;top:320px;width:1185px;height:19px;background:#FFFFFF;"></div>
<div class="r" style="left:289px;top:320px;width:1px;height:19px;background:#D4D4D4;"></div>
<div class="r" style="left:483px;top:320px;width:1px;height:19px;background:#D4D4D4;"></div>
<div class="r" style="left:626px;top:320px;width:1px;height:19px;background:#D4D4D4;"></div>
<div class="r" style="left:700px;top:320px;width:1px;height:19px;background:#D4D4D4;"></div>
<div class="r" style="left:886px;top:320px;width:1px;height:19px;background:#D4D4D4;"></div>
<div class="r" style="left:1030px;top:320px;width:1px;height:19px;background:#D4D4D4;"></div>
<div class="r" style="left:1136px;top:320px;width:1px;height:19px;background:#D4D4D4;"></div>
<div class="r" style="left:26px;top:339px;width:1185px;height:1px;background:#8EA9DB;"></div>
<div class="r" style="left:26px;top:320px;width:263px;height:19px;overflow:hidden;">
<div class="t" style="left:1.3px;top:0.75px;font-size:14px;line-height:20px;color:#000;font-kerning:none;transform:scaleX(0.9396);transform-origin:0 0;">3a064444-e6d5-4c97-9372-f01a783d4f49</div>
</div>
<div class="r" style="left:290px;top:320px;width:193px;height:19px;overflow:hidden;">
<div class="t" style="left:1.3px;top:0.75px;font-size:14px;line-height:20px;color:#000;font-kerning:none;transform:scaleX(0.9879);transform-origin:0 0;">Jonathan.Fisher@exoip.com</div>
</div>
<div class="r" style="left:484px;top:320px;width:142px;height:19px;overflow:hidden;">
<div class="t" style="left:1.3px;top:0.75px;font-size:14px;line-height:20px;color:#000;font-kerning:none;transform:scaleX(0.9718);transform-origin:0 0;">Jonathan Fisher</div>
</div>
<div class="r" style="left:627px;top:320px;width:73px;height:19px;overflow:hidden;">
<div class="t" style="left:0;width:74px;text-align:center;top:0.75px;font-size:14px;line-height:20px;color:#000;font-kerning:none;transform:scaleX(0.8138);transform-origin:50% 0;">FALSE</div>
</div>
<div class="r" style="left:701px;top:320px;width:185px;height:19px;overflow:hidden;">
<div class="t" style="left:1.3px;top:0.75px;font-size:14px;line-height:20px;color:#000;font-kerning:none;transform:scaleX(1.0219);transform-origin:0 0;">none</div>
</div>
<div class="r" style="left:1031px;top:320px;width:105px;height:19px;overflow:hidden;">
<div class="t" style="left:0;width:106px;text-align:center;top:0.75px;font-size:14px;line-height:20px;color:#000;font-kerning:none;transform:scaleX(0.8138);transform-origin:50% 0;">FALSE</div>
</div>
<div class="r" style="left:1137px;top:320px;width:122px;height:19px;overflow:hidden;">
<div class="t" style="left:0;width:123px;text-align:center;top:0.75px;font-size:14px;line-height:20px;color:#000;font-kerning:none;transform:scaleX(0.8138);transform-origin:50% 0;">FALSE</div>
</div>
<div class="r" style="left:26px;top:340px;width:1185px;height:19px;background:#D9E1F2;"></div>
<div class="r" style="left:26px;top:359px;width:1185px;height:1px;background:#8EA9DB;"></div>
<div class="r" style="left:26px;top:340px;width:263px;height:19px;overflow:hidden;">
<div class="t" style="left:1.3px;top:0.75px;font-size:14px;line-height:20px;color:#000;font-kerning:none;transform:scaleX(0.9619);transform-origin:0 0;">4228d3c5-06ba-4cd0-8a19-6fdd2edfef32</div>
</div>
<div class="r" style="left:290px;top:340px;width:193px;height:19px;overflow:hidden;">
<div class="t" style="left:1.3px;top:0.75px;font-size:14px;line-height:20px;color:#000;font-kerning:none;transform:scaleX(0.9925);transform-origin:0 0;">Joshua.Hunter@exoip.com</div>
</div>
<div class="r" style="left:484px;top:340px;width:142px;height:19px;overflow:hidden;">
<div class="t" style="left:1.3px;top:0.75px;font-size:14px;line-height:20px;color:#000;font-kerning:none;transform:scaleX(0.9787);transform-origin:0 0;">Joshua Hunter</div>
</div>
<div class="r" style="left:627px;top:340px;width:73px;height:19px;overflow:hidden;">
<div class="t" style="left:0;width:74px;text-align:center;top:0.75px;font-size:14px;line-height:20px;color:#000;font-kerning:none;transform:scaleX(0.8138);transform-origin:50% 0;">FALSE</div>
</div>
<div class="r" style="left:701px;top:340px;width:185px;height:19px;overflow:hidden;">
<div class="t" style="left:1.3px;top:0.75px;font-size:14px;line-height:20px;color:#000;font-kerning:none;transform:scaleX(1.0219);transform-origin:0 0;">none</div>
</div>
<div class="r" style="left:1031px;top:340px;width:105px;height:19px;overflow:hidden;">
<div class="t" style="left:0;width:106px;text-align:center;top:0.75px;font-size:14px;line-height:20px;color:#000;font-kerning:none;transform:scaleX(0.8138);transform-origin:50% 0;">FALSE</div>
</div>
<div class="r" style="left:1137px;top:340px;width:122px;height:19px;overflow:hidden;">
<div class="t" style="left:0;width:123px;text-align:center;top:0.75px;font-size:14px;line-height:20px;color:#000;font-kerning:none;transform:scaleX(0.8138);transform-origin:50% 0;">FALSE</div>
</div>
<div class="r" style="left:26px;top:360px;width:1185px;height:19px;background:#FFFFFF;"></div>
<div class="r" style="left:289px;top:360px;width:1px;height:19px;background:#D4D4D4;"></div>
<div class="r" style="left:483px;top:360px;width:1px;height:19px;background:#D4D4D4;"></div>
<div class="r" style="left:626px;top:360px;width:1px;height:19px;background:#D4D4D4;"></div>
<div class="r" style="left:700px;top:360px;width:1px;height:19px;background:#D4D4D4;"></div>
<div class="r" style="left:886px;top:360px;width:1px;height:19px;background:#D4D4D4;"></div>
<div class="r" style="left:1030px;top:360px;width:1px;height:19px;background:#D4D4D4;"></div>
<div class="r" style="left:1136px;top:360px;width:1px;height:19px;background:#D4D4D4;"></div>
<div class="r" style="left:26px;top:379px;width:1185px;height:1px;background:#8EA9DB;"></div>
<div class="r" style="left:26px;top:360px;width:263px;height:19px;overflow:hidden;">
<div class="t" style="left:1.3px;top:0.75px;font-size:14px;line-height:20px;color:#000;font-kerning:none;transform:scaleX(0.9413);transform-origin:0 0;">9627665e-1fc4-408f-8150-8423b08e11ac</div>
</div>
<div class="r" style="left:290px;top:360px;width:193px;height:19px;overflow:hidden;">
<div class="t" style="left:1.3px;top:0.75px;font-size:14px;line-height:20px;color:#000;font-kerning:none;transform:scaleX(0.9874);transform-origin:0 0;">Kylie.Davidson@exoip.com</div>
</div>
<div class="r" style="left:484px;top:360px;width:142px;height:19px;overflow:hidden;">
<div class="t" style="left:1.3px;top:0.75px;font-size:14px;line-height:20px;color:#000;font-kerning:none;transform:scaleX(0.9696);transform-origin:0 0;">Kylie Davidson</div>
</div>
<div class="r" style="left:627px;top:360px;width:73px;height:19px;overflow:hidden;">
<div class="t" style="left:0;width:74px;text-align:center;top:0.75px;font-size:14px;line-height:20px;color:#000;font-kerning:none;transform:scaleX(0.8138);transform-origin:50% 0;">FALSE</div>
</div>
<div class="r" style="left:701px;top:360px;width:185px;height:19px;overflow:hidden;">
<div class="t" style="left:1.3px;top:0.75px;font-size:14px;line-height:20px;color:#000;font-kerning:none;transform:scaleX(1.0219);transform-origin:0 0;">none</div>
</div>
<div class="r" style="left:1031px;top:360px;width:105px;height:19px;overflow:hidden;">
<div class="t" style="left:0;width:106px;text-align:center;top:0.75px;font-size:14px;line-height:20px;color:#000;font-kerning:none;transform:scaleX(0.8138);transform-origin:50% 0;">FALSE</div>
</div>
<div class="r" style="left:1137px;top:360px;width:122px;height:19px;overflow:hidden;">
<div class="t" style="left:0;width:123px;text-align:center;top:0.75px;font-size:14px;line-height:20px;color:#000;font-kerning:none;transform:scaleX(0.8138);transform-origin:50% 0;">FALSE</div>
</div>
<div class="r" style="left:26px;top:380px;width:1185px;height:19px;background:#D9E1F2;"></div>
<div class="r" style="left:26px;top:399px;width:1185px;height:1px;background:#8EA9DB;"></div>
<div class="r" style="left:26px;top:380px;width:263px;height:19px;overflow:hidden;">
<div class="t" style="left:1.3px;top:0.75px;font-size:14px;line-height:20px;color:#000;font-kerning:none;transform:scaleX(0.9459);transform-origin:0 0;">50525a3e-aaa9-4b3d-95bd-4643845bb638</div>
</div>
<div class="r" style="left:290px;top:380px;width:193px;height:19px;overflow:hidden;">
<div class="t" style="left:1.3px;top:0.75px;font-size:14px;line-height:20px;color:#000;font-kerning:none;transform:scaleX(0.9772);transform-origin:0 0;">Lauren.Russell@exoip.com</div>
</div>
<div class="r" style="left:484px;top:380px;width:142px;height:19px;overflow:hidden;">
<div class="t" style="left:1.3px;top:0.75px;font-size:14px;line-height:20px;color:#000;font-kerning:none;transform:scaleX(0.9510);transform-origin:0 0;">Lauren Russell</div>
</div>
<div class="r" style="left:627px;top:380px;width:73px;height:19px;overflow:hidden;">
<div class="t" style="left:0;width:74px;text-align:center;top:0.75px;font-size:14px;line-height:20px;color:#000;font-kerning:none;transform:scaleX(0.8138);transform-origin:50% 0;">FALSE</div>
</div>
<div class="r" style="left:701px;top:380px;width:185px;height:19px;overflow:hidden;">
<div class="t" style="left:1.3px;top:0.75px;font-size:14px;line-height:20px;color:#000;font-kerning:none;transform:scaleX(1.0219);transform-origin:0 0;">none</div>
</div>
<div class="r" style="left:1031px;top:380px;width:105px;height:19px;overflow:hidden;">
<div class="t" style="left:0;width:106px;text-align:center;top:0.75px;font-size:14px;line-height:20px;color:#000;font-kerning:none;transform:scaleX(0.8138);transform-origin:50% 0;">FALSE</div>
</div>
<div class="r" style="left:1137px;top:380px;width:122px;height:19px;overflow:hidden;">
<div class="t" style="left:0;width:123px;text-align:center;top:0.75px;font-size:14px;line-height:20px;color:#000;font-kerning:none;transform:scaleX(0.8138);transform-origin:50% 0;">FALSE</div>
</div>
<div class="r" style="left:26px;top:400px;width:1185px;height:19px;background:#FFFFFF;"></div>
<div class="r" style="left:289px;top:400px;width:1px;height:19px;background:#D4D4D4;"></div>
<div class="r" style="left:483px;top:400px;width:1px;height:19px;background:#D4D4D4;"></div>
<div class="r" style="left:626px;top:400px;width:1px;height:19px;background:#D4D4D4;"></div>
<div class="r" style="left:700px;top:400px;width:1px;height:19px;background:#D4D4D4;"></div>
<div class="r" style="left:886px;top:400px;width:1px;height:19px;background:#D4D4D4;"></div>
<div class="r" style="left:1030px;top:400px;width:1px;height:19px;background:#D4D4D4;"></div>
<div class="r" style="left:1136px;top:400px;width:1px;height:19px;background:#D4D4D4;"></div>
<div class="r" style="left:26px;top:419px;width:1185px;height:1px;background:#8EA9DB;"></div>
<div class="r" style="left:26px;top:400px;width:263px;height:19px;overflow:hidden;">
<div class="t" style="left:1.3px;top:0.75px;font-size:14px;line-height:20px;color:#000;font-kerning:none;transform:scaleX(0.9490);transform-origin:0 0;">7accea74-7a28-4e8f-9d7f-3c0c5e57ba2e</div>
</div>
<div class="r" style="left:290px;top:400px;width:193px;height:19px;overflow:hidden;">
<div class="t" style="left:1.3px;top:0.75px;font-size:14px;line-height:20px;color:#000;font-kerning:none;transform:scaleX(1.0037);transform-origin:0 0;">Mohammad.Fistak@exoip.com</div>
</div>
<div class="r" style="left:484px;top:400px;width:142px;height:19px;overflow:hidden;">
<div class="t" style="left:1.3px;top:0.75px;font-size:14px;line-height:20px;color:#000;font-kerning:none;transform:scaleX(1.0004);transform-origin:0 0;">Mohammad Fistak</div>
</div>
<div class="r" style="left:627px;top:400px;width:73px;height:19px;overflow:hidden;">
<div class="t" style="left:0;width:74px;text-align:center;top:0.75px;font-size:14px;line-height:20px;color:#000;font-kerning:none;transform:scaleX(0.8138);transform-origin:50% 0;">FALSE</div>
</div>
<div class="r" style="left:701px;top:400px;width:185px;height:19px;overflow:hidden;">
<div class="t" style="left:1.3px;top:0.75px;font-size:14px;line-height:20px;color:#000;font-kerning:none;transform:scaleX(1.0219);transform-origin:0 0;">none</div>
</div>
<div class="r" style="left:1031px;top:400px;width:105px;height:19px;overflow:hidden;">
<div class="t" style="left:0;width:106px;text-align:center;top:0.75px;font-size:14px;line-height:20px;color:#000;font-kerning:none;transform:scaleX(0.8138);transform-origin:50% 0;">FALSE</div>
</div>
<div class="r" style="left:1137px;top:400px;width:122px;height:19px;overflow:hidden;">
<div class="t" style="left:0;width:123px;text-align:center;top:0.75px;font-size:14px;line-height:20px;color:#000;font-kerning:none;transform:scaleX(0.8138);transform-origin:50% 0;">FALSE</div>
</div>
<div class="r" style="left:26px;top:420px;width:1185px;height:19px;background:#D9E1F2;"></div>
<div class="r" style="left:26px;top:439px;width:1185px;height:1px;background:#8EA9DB;"></div>
</div>
<div class="r" style="left:1px;top:651px;width:1212px;height:1px;background:#ABABAB;"></div>
<div class="r" style="left:1212px;top:228px;width:1px;height:424px;background:#BDBDBD;"></div>
<div class="r" style="left:1216px;top:210px;width:15px;height:14px;background:#FFFFFF;border:1px solid #ABABAB;box-sizing:border-box;"></div>
<svg class="r" style="left:1219px;top:214px;" width="9" height="6" viewBox="0 0 9 6"><path d="M0.5 5.5h8L4.5 1z" fill="#222"/></svg>
<div class="r" style="left:1216px;top:225px;width:15px;height:412px;background:#F0F0F0;"></div>
<div class="r" style="left:1216px;top:223px;width:15px;height:220px;background:#FFFFFF;border:1px solid #ABABAB;box-sizing:border-box;"></div>
<div class="r" style="left:1216px;top:637px;width:15px;height:14px;background:#FFFFFF;border:1px solid #ABABAB;box-sizing:border-box;"></div>
<svg class="r" style="left:1219px;top:641px;" width="9" height="6" viewBox="0 0 9 6"><path d="M0.5 0.5h8L4.5 5z" fill="#222"/></svg>
<div class="r" style="left:1px;top:652px;width:1211px;height:27px;background:#E6E6E6;"></div>
<div class="r" style="left:1px;top:679px;width:1233px;height:1px;background:#D0D0D0;"></div>
<svg class="r" style="left:27px;top:660px;" width="7" height="10" viewBox="0 0 7 10"><path d="M5.2 1v8L1 5z" fill="#C3C3C3"/></svg>
<svg class="r" style="left:56px;top:660px;" width="7" height="10" viewBox="0 0 7 10"><path d="M1 1v8L5.2 5z" fill="#C3C3C3"/></svg>
<div class="r" style="left:101px;top:651px;width:157px;height:25px;background:#FFFFFF;border-left:1px solid #ABABAB;border-right:1px solid #ABABAB;box-sizing:border-box;"></div>
<div class="r" style="left:101px;top:674px;width:157px;height:2px;background:#217346;"></div>
<div class="t" style="left:-120.50px;width:600px;text-align:center;top:655.29px;font-size:13.6px;line-height:17px;color:#217346;font-weight:400;transform:scaleX(1.045);transform-origin:50% 0;-webkit-text-stroke:0.55px #217346;">AuthenticationReport</div>
<svg class="r" style="left:290px;top:656px;" width="18" height="18" viewBox="0 0 18 18"><circle cx="9" cy="9" r="7.5" fill="none" stroke="#666" stroke-width="1.1"/><path d="M9 5v8M5 9h8" stroke="#555" stroke-width="1.4"/></svg>
<div class="r" style="left:741px;top:661px;width:2px;height:2px;background:#A6A6A6;"></div>
<div class="r" style="left:741px;top:665px;width:2px;height:2px;background:#A6A6A6;"></div>
<div class="r" style="left:741px;top:669px;width:2px;height:2px;background:#A6A6A6;"></div>
<div class="r" style="left:758px;top:658px;width:15px;height:15px;background:#FFFFFF;border:1px solid #ABABAB;box-sizing:border-box;"></div>
<svg class="r" style="left:762px;top:661px;" width="7" height="9" viewBox="0 0 7 9"><path d="M6 0.5v8L1 4.5z" fill="#222"/></svg>
<div class="r" style="left:772px;top:658px;width:227px;height:15px;background:#FFFFFF;border:1px solid #ABABAB;box-sizing:border-box;"></div>
<div class="r" style="left:999px;top:659px;width:199px;height:13px;background:#EDEDED;"></div>
<div class="r" style="left:1198px;top:658px;width:15px;height:15px;background:#FFFFFF;border:1px solid #ABABAB;box-sizing:border-box;"></div>
<svg class="r" style="left:1202px;top:661px;" width="7" height="9" viewBox="0 0 7 9"><path d="M1 0.5v8L6 4.5z" fill="#222"/></svg>
<div class="r" style="left:1px;top:680px;width:1233px;height:21px;background:#F3F3F3;"></div>
<div class="t" style="left:8.30px;top:683.76px;font-size:10.8px;line-height:14px;color:#444444;font-weight:400;transform:scaleX(1.03);transform-origin:0 0;">Ready</div>
<div class="r" style="left:923px;top:680px;width:40px;height:21px;background:#D4D4D4;"></div>
<svg class="r" style="left:935px;top:682px;" width="15" height="15" viewBox="0 0 15 15"><rect x="1.5" y="1.5" width="12" height="12" fill="#EDEDED" stroke="#444" stroke-width="1.2"/><path d="M5.5 1.5v12M9.5 1.5v12M1.5 5.5h12M1.5 9.5h12" stroke="#444" stroke-width="1.1"/></svg>
<svg class="r" style="left:975px;top:682px;" width="16" height="15" viewBox="0 0 16 15"><rect x="1.5" y="1.5" width="13" height="12" fill="none" stroke="#444" stroke-width="1.2"/><rect x="4.5" y="3.5" width="7" height="8" fill="none" stroke="#444" stroke-width="1"/><path d="M6 5.8h4M6 7.8h4M6 9.8h4" stroke="#444" stroke-width="0.9"/></svg>
<svg class="r" style="left:1015px;top:682px;" width="16" height="15" viewBox="0 0 16 15"><path d="M1.5 1.5h13v12h-13z" fill="none" stroke="#444" stroke-width="1.2"/><path d="M4.5 1.5v6.5M7.5 1.5v6.5H1.5" fill="none" stroke="#444" stroke-width="1.1"/></svg>
<div class="r" style="left:1049px;top:690px;width:8px;height:1px;background:#555;"></div>
<div class="r" style="left:1062px;top:690px;width:100px;height:1px;background:#666;"></div>
<div class="r" style="left:1110px;top:685px;width:6px;height:11px;background:#444;"></div>
<svg class="r" style="left:1165px;top:685px;" width="11" height="11" viewBox="0 0 11 11"><path d="M5.5 0.5v10M0.5 5.5h10" stroke="#555" stroke-width="1.1"/></svg>
<div class="t" style="right:20.00px;text-align:right;top:684.33px;font-size:10.6px;line-height:13px;color:#444444;font-weight:400;">100%</div>
</body></html>
